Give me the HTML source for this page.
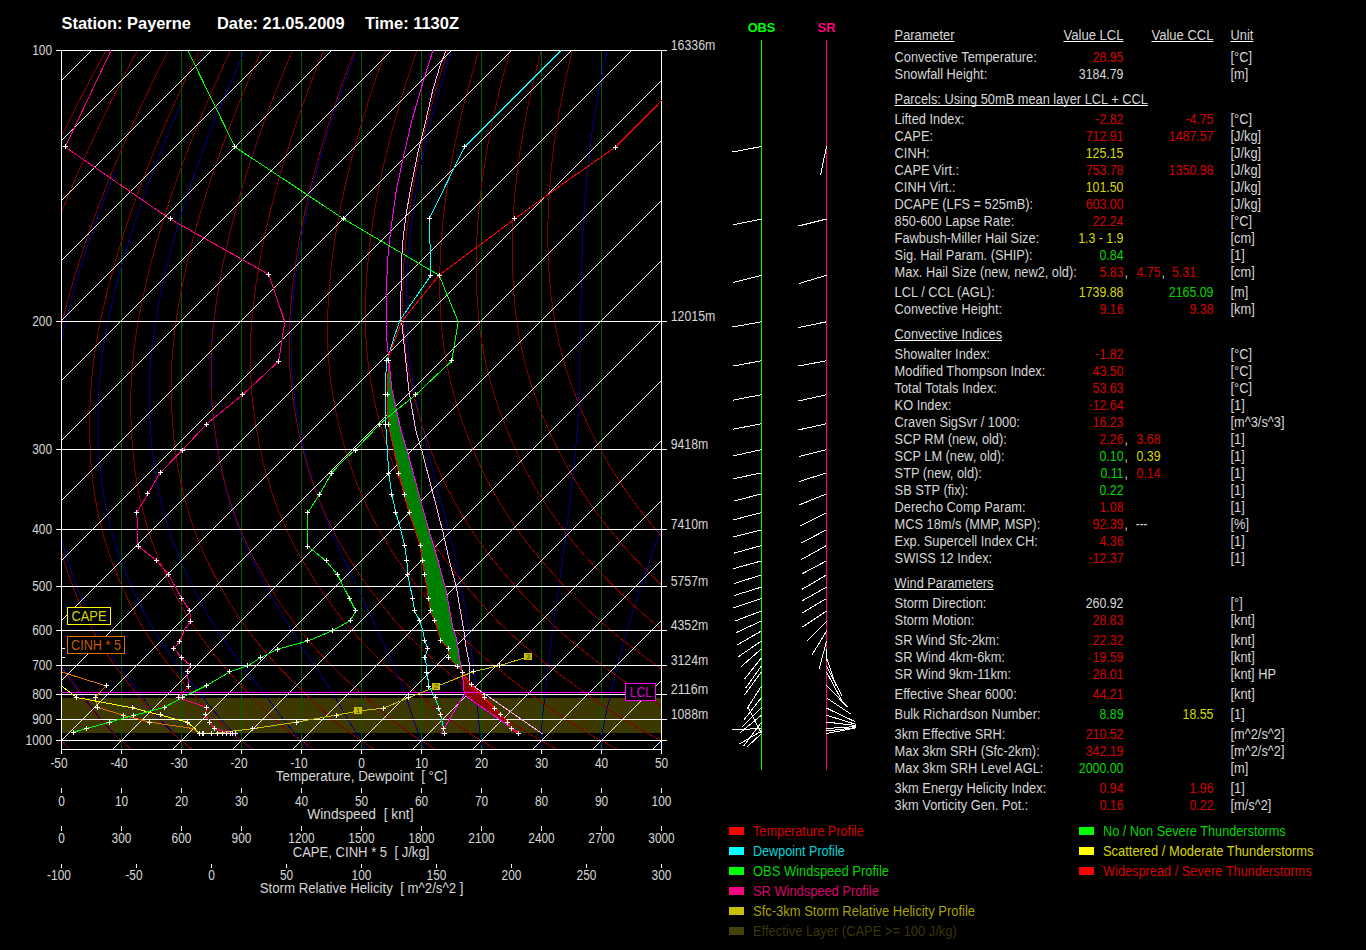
<!DOCTYPE html>
<html><head><meta charset="utf-8"><style>
html,body{margin:0;padding:0;background:#000;}
body{width:1366px;height:950px;overflow:hidden;}
svg{display:block;font-family:"Liberation Sans",sans-serif;}
text{white-space:pre;}
</style></head><body>
<svg width="1366" height="950" viewBox="0 0 1366 950">
<rect width="1366" height="950" fill="#000"/>
<defs><clipPath id="cf"><rect x="61" y="50" width="601" height="700"/></clipPath></defs>
<g clip-path="url(#cf)" shape-rendering="crispEdges" fill="none" stroke-width="1">
<rect x="61" y="698" width="600" height="35" fill="#3c3800" stroke="none"/>
<line x1="121.5" y1="50" x2="121.5" y2="749" stroke="#006000"/>
<line x1="181.5" y1="50" x2="181.5" y2="749" stroke="#006000"/>
<line x1="241.5" y1="50" x2="241.5" y2="749" stroke="#006000"/>
<line x1="301.5" y1="50" x2="301.5" y2="749" stroke="#006000"/>
<line x1="361.5" y1="50" x2="361.5" y2="749" stroke="#006000"/>
<line x1="421.5" y1="50" x2="421.5" y2="749" stroke="#006000"/>
<line x1="481.5" y1="50" x2="481.5" y2="749" stroke="#006000"/>
<line x1="541.5" y1="50" x2="541.5" y2="749" stroke="#006000"/>
<line x1="601.5" y1="50" x2="601.5" y2="749" stroke="#006000"/>
<polyline points="72.8,751.5 71.8,750.6 70.8,749.7 69.8,748.8 68.8,747.9 67.8,747.0 66.8,746.1 65.9,745.1 64.9,744.2 63.9,743.3 63.0,742.4 62.1,741.4 60.8,740.2 58.1,737.4 55.4,734.6 52.8,731.8 50.3,729.0 47.8,726.1 45.3,723.2 43.0,720.2 40.6,717.2 38.4,714.2 36.2,711.1 34.0,708.0 31.9,704.9 29.9,701.8 27.8,698.6 25.8,695.5 23.7,692.4 21.7,689.3 19.7,686.2 17.7,683.1 15.7,680.0 13.8,676.9 11.9,673.8 10.0,670.6 8.2,667.5 6.4,664.3 4.6,661.1 2.9,657.9 1.2,654.7 -0.5,651.5 -2.1,648.2 -3.7,645.0 -5.3,641.7 -6.8,638.4 -8.3,635.1 -9.7,631.7 -11.1,628.4 -12.5,625.0 -13.8,621.6 -15.0,618.2 -16.3,614.7 -17.5,611.2 -18.6,607.8 -19.7,604.3 -20.8,600.7 -21.9,597.2 -22.9,593.7 -23.9,590.1 -24.9,586.6 -25.8,583.0 -26.7,579.4 -27.6,575.8 -28.5,572.2 -29.3,568.6 -30.1,565.0 -30.9,561.4 -31.6,557.7 -32.3,554.1 -32.9,550.4 -33.6,546.7 -34.1,542.9 -34.7,539.2 -35.2,535.4 -35.6,531.6 -36.0,527.8 -36.4,523.9 -36.7,520.0 -37.0,516.2 -37.3,512.3 -37.5,508.3 -37.7,504.4 -37.9,500.4 -38.0,496.5 -38.1,492.5 -38.1,488.4 -38.1,484.4 -38.1,480.3 -38.0,476.2 -37.9,472.1 -37.8,468.0 -37.6,463.8 -37.4,459.7 -37.1,455.4 -36.8,451.2 -36.4,447.0 -36.1,442.7 -35.7,438.4 -35.2,434.1 -34.8,429.8 -34.3,425.5 -33.7,421.2 -33.2,416.8 -32.6,412.4 -32.0,408.1 -31.3,403.7 -30.6,399.2 -29.9,394.8 -29.1,390.3 -28.3,385.8 -27.4,381.2 -26.5,376.7 -25.6,372.1 -24.6,367.5 -23.5,362.8 -22.4,358.2 -21.3,353.4 -20.1,348.7 -18.9,343.9 -17.6,339.1 -16.3,334.2 -14.9,329.3 -13.4,324.4 -11.9,319.4 -10.4,314.4 -8.8,309.3 -7.2,304.3 -5.5,299.2 -3.8,294.1 -2.0,288.9 -1.0,285.8" stroke="#000080"/>
<polyline points="133.4,751.5 132.3,750.6 131.3,749.7 130.2,748.8 129.2,747.9 128.2,747.0 127.1,746.1 126.1,745.1 125.1,744.2 124.1,743.3 123.1,742.4 122.1,741.4 120.7,740.2 117.9,737.4 115.0,734.6 112.3,731.8 109.6,729.0 106.9,726.1 104.3,723.2 101.7,720.2 99.2,717.2 96.7,714.2 94.3,711.1 92.0,708.0 89.7,704.9 87.4,701.8 85.1,698.6 82.9,695.5 80.6,692.4 78.4,689.3 76.2,686.2 74.0,683.1 71.8,680.0 69.6,676.9 67.5,673.8 65.4,670.6 63.4,667.5 61.4,664.3 59.4,661.1 57.4,657.9 55.5,654.7 53.6,651.5 51.8,648.2 50.0,645.0 48.2,641.7 46.5,638.4 44.8,635.1 43.1,631.7 41.5,628.4 40.0,625.0 38.4,621.6 37.0,618.2 35.5,614.7 34.1,611.2 32.7,607.8 31.4,604.3 30.1,600.7 28.9,597.2 27.6,593.7 26.4,590.1 25.3,586.6 24.1,583.0 23.0,579.4 21.9,575.8 20.9,572.2 19.8,568.6 18.8,565.0 17.9,561.4 16.9,557.7 16.0,554.1 15.2,550.4 14.4,546.7 13.6,542.9 12.9,539.2 12.2,535.4 11.5,531.6 10.9,527.8 10.4,523.9 9.8,520.0 9.3,516.2 8.9,512.3 8.5,508.3 8.1,504.4 7.7,500.4 7.4,496.5 7.1,492.5 6.9,488.4 6.7,484.4 6.6,480.3 6.4,476.2 6.4,472.1 6.3,468.0 6.4,463.8 6.4,459.7 6.5,455.4 6.6,451.2 6.8,447.0 7.0,442.7 7.2,438.4 7.5,434.1 7.8,429.8 8.1,425.5 8.4,421.2 8.8,416.8 9.2,412.4 9.7,408.1 10.2,403.7 10.7,399.2 11.3,394.8 11.9,390.3 12.5,385.8 13.2,381.2 14.0,376.7 14.8,372.1 15.6,367.5 16.5,362.8 17.4,358.2 18.4,353.4 19.4,348.7 20.4,343.9 21.6,339.1 22.8,334.2 24.0,329.3 25.3,324.4 26.6,319.4 28.0,314.4 29.4,309.3 30.9,304.3 32.4,299.2 34.0,294.1 35.6,288.9 37.2,283.8 38.9,278.6 40.6,273.3 42.3,268.1 44.1,262.8 46.0,257.5 47.8,252.2 49.8,246.8 51.7,241.5 53.7,236.0 55.8,230.6 56.6,228.4" stroke="#000080"/>
<polyline points="193.5,751.5 192.4,750.6 191.4,749.7 190.3,748.8 189.3,747.9 188.2,747.0 187.2,746.1 186.2,745.1 185.2,744.2 184.1,743.3 183.1,742.4 182.1,741.4 180.7,740.2 177.8,737.4 174.9,734.6 172.1,731.8 169.3,729.0 166.5,726.1 163.8,723.2 161.1,720.2 158.4,717.2 155.8,714.2 153.3,711.1 150.8,708.0 148.4,704.9 145.9,701.8 143.5,698.6 141.1,695.5 138.7,692.4 136.3,689.3 133.9,686.2 131.5,683.1 129.1,680.0 126.8,676.9 124.4,673.8 122.2,670.6 119.9,667.5 117.7,664.3 115.5,661.1 113.4,657.9 111.3,654.7 109.2,651.5 107.1,648.2 105.1,645.0 103.1,641.7 101.2,638.4 99.3,635.1 97.4,631.7 95.6,628.4 93.8,625.0 92.1,621.6 90.4,618.2 88.8,614.7 87.2,611.2 85.6,607.8 84.0,604.3 82.5,600.7 81.1,597.2 79.6,593.7 78.2,590.1 76.8,586.6 75.5,583.0 74.2,579.4 72.9,575.8 71.6,572.2 70.4,568.6 69.2,565.0 68.0,561.4 66.9,557.7 65.8,554.1 64.7,550.4 63.7,546.7 62.7,542.9 61.8,539.2 60.9,535.4 60.0,531.6 59.2,527.8 58.5,523.9 57.7,520.0 57.1,516.2 56.4,512.3 55.8,508.3 55.2,504.4 54.7,500.4 54.2,496.5 53.7,492.5 53.3,488.4 52.9,484.4 52.6,480.3 52.3,476.2 52.0,472.1 51.8,468.0 51.6,463.8 51.5,459.7 51.4,455.4 51.3,451.2 51.3,447.0 51.3,442.7 51.4,438.4 51.4,434.1 51.5,429.8 51.7,425.5 51.9,421.2 52.1,416.8 52.3,412.4 52.6,408.1 52.9,403.7 53.3,399.2 53.7,394.8 54.1,390.3 54.6,385.8 55.1,381.2 55.6,376.7 56.3,372.1 56.9,367.5 57.6,362.8 58.4,358.2 59.2,353.4 60.0,348.7 60.9,343.9 61.9,339.1 62.9,334.2 64.0,329.3 65.1,324.4 66.3,319.4 67.5,314.4 68.8,309.3 70.1,304.3 71.4,299.2 72.8,294.1 74.3,288.9 75.7,283.8 77.2,278.6 78.8,273.3 80.4,268.1 82.0,262.8 83.7,257.5 85.5,252.2 87.2,246.8 89.0,241.5 90.9,236.0 92.8,230.6 94.7,225.1 96.7,219.6 98.7,214.1 100.8,208.6 102.9,203.0 105.0,197.4 107.2,191.8 109.4,186.1 111.7,180.4 114.0,174.7 116.4,169.0 116.4,169.0" stroke="#000080"/>
<polyline points="252.7,751.5 251.8,750.6 250.8,749.7 249.8,748.8 248.8,747.9 247.9,747.0 246.9,746.1 245.9,745.1 245.0,744.2 244.0,743.3 243.0,742.4 242.1,741.4 240.7,740.2 238.0,737.4 235.2,734.6 232.4,731.8 229.7,729.0 227.0,726.1 224.3,723.2 221.7,720.2 219.1,717.2 216.5,714.2 213.9,711.1 211.4,708.0 209.0,704.9 206.5,701.8 204.0,698.6 201.5,695.5 199.0,692.4 196.5,689.3 194.0,686.2 191.5,683.1 189.0,680.0 186.5,676.9 184.1,673.8 181.7,670.6 179.3,667.5 176.9,664.3 174.6,661.1 172.3,657.9 170.0,654.7 167.7,651.5 165.5,648.2 163.3,645.0 161.1,641.7 159.0,638.4 156.9,635.1 154.9,631.7 152.9,628.4 150.9,625.0 149.0,621.6 147.1,618.2 145.2,614.7 143.4,611.2 141.6,607.8 139.9,604.3 138.1,600.7 136.5,597.2 134.8,593.7 133.2,590.1 131.6,586.6 130.0,583.0 128.5,579.4 127.0,575.8 125.5,572.2 124.1,568.6 122.6,565.0 121.3,561.4 119.9,557.7 118.6,554.1 117.3,550.4 116.1,546.7 114.9,542.9 113.8,539.2 112.7,535.4 111.6,531.6 110.6,527.8 109.6,523.9 108.7,520.0 107.8,516.2 107.0,512.3 106.1,508.3 105.4,504.4 104.6,500.4 103.9,496.5 103.2,492.5 102.6,488.4 102.0,484.4 101.5,480.3 101.0,476.2 100.5,472.1 100.1,468.0 99.7,463.8 99.4,459.7 99.1,455.4 98.9,451.2 98.7,447.0 98.5,442.7 98.3,438.4 98.2,434.1 98.1,429.8 98.1,425.5 98.1,421.2 98.1,416.8 98.1,412.4 98.2,408.1 98.3,403.7 98.5,399.2 98.7,394.8 99.0,390.3 99.3,385.8 99.6,381.2 100.0,376.7 100.4,372.1 100.9,367.5 101.4,362.8 102.0,358.2 102.6,353.4 103.3,348.7 104.0,343.9 104.8,339.1 105.6,334.2 106.5,329.3 107.5,324.4 108.5,319.4 109.5,314.4 110.6,309.3 111.8,304.3 112.9,299.2 114.2,294.1 115.4,288.9 116.7,283.8 118.1,278.6 119.5,273.3 120.9,268.1 122.4,262.8 123.9,257.5 125.5,252.2 127.1,246.8 128.7,241.5 130.4,236.0 132.1,230.6 133.9,225.1 135.7,219.6 137.6,214.1 139.5,208.6 141.4,203.0 143.4,197.4 145.4,191.8 147.5,186.1 149.6,180.4 151.8,174.7 154.0,169.0 156.2,163.2 158.5,157.4 160.8,151.6 163.2,145.7 165.6,139.8 168.1,133.9 170.6,128.0 173.1,122.0 175.7,116.0 178.3,109.9 181.0,103.9 181.0,103.9" stroke="#000080"/>
<polyline points="311.0,751.5 310.2,750.6 309.4,749.7 308.6,748.8 307.7,747.9 306.9,747.0 306.1,746.1 305.3,745.1 304.4,744.2 303.6,743.3 302.8,742.4 302.0,741.4 300.8,740.2 298.4,737.4 296.0,734.6 293.6,731.8 291.2,729.0 288.8,726.1 286.5,723.2 284.1,720.2 281.7,717.2 279.4,714.2 277.1,711.1 274.8,708.0 272.5,704.9 270.2,701.8 267.9,698.6 265.5,695.5 263.2,692.4 260.8,689.3 258.3,686.2 255.9,683.1 253.5,680.0 251.0,676.9 248.6,673.8 246.2,670.6 243.8,667.5 241.4,664.3 239.1,661.1 236.7,657.9 234.3,654.7 232.0,651.5 229.7,648.2 227.4,645.0 225.1,641.7 222.9,638.4 220.6,635.1 218.5,631.7 216.3,628.4 214.2,625.0 212.1,621.6 210.0,618.2 208.0,614.7 206.0,611.2 204.0,607.8 202.1,604.3 200.2,600.7 198.3,597.2 196.5,593.7 194.7,590.1 192.9,586.6 191.1,583.0 189.3,579.4 187.6,575.8 185.9,572.2 184.3,568.6 182.6,565.0 181.0,561.4 179.5,557.7 177.9,554.1 176.4,550.4 175.0,546.7 173.6,542.9 172.2,539.2 170.9,535.4 169.6,531.6 168.4,527.8 167.2,523.9 166.0,520.0 164.9,516.2 163.8,512.3 162.7,508.3 161.7,504.4 160.8,500.4 159.8,496.5 158.9,492.5 158.1,488.4 157.3,484.4 156.5,480.3 155.8,476.2 155.1,472.1 154.5,468.0 153.9,463.8 153.3,459.7 152.8,455.4 152.3,451.2 151.9,447.0 151.5,442.7 151.2,438.4 150.8,434.1 150.5,429.8 150.3,425.5 150.0,421.2 149.8,416.8 149.7,412.4 149.6,408.1 149.5,403.7 149.4,399.2 149.4,394.8 149.5,390.3 149.6,385.8 149.7,381.2 149.9,376.7 150.1,372.1 150.4,367.5 150.7,362.8 151.1,358.2 151.5,353.4 152.0,348.7 152.5,343.9 153.1,339.1 153.7,334.2 154.4,329.3 155.2,324.4 156.0,319.4 156.8,314.4 157.7,309.3 158.7,304.3 159.7,299.2 160.7,294.1 161.8,288.9 162.9,283.8 164.0,278.6 165.2,273.3 166.5,268.1 167.8,262.8 169.1,257.5 170.5,252.2 171.9,246.8 173.3,241.5 174.8,236.0 176.4,230.6 178.0,225.1 179.6,219.6 181.3,214.1 183.0,208.6 184.8,203.0 186.6,197.4 188.4,191.8 190.3,186.1 192.3,180.4 194.3,174.7 196.3,169.0 198.4,163.2 200.5,157.4 202.6,151.6 204.8,145.7 207.1,139.8 209.4,133.9 211.7,128.0 214.1,122.0 216.5,116.0 219.0,109.9 221.5,103.9 224.0,97.8 226.6,91.7 229.3,85.5 232.0,79.3 234.7,73.1 237.5,66.9 240.3,60.6 243.1,54.3 244.9,50.5" stroke="#000080"/>
<polyline points="368.5,751.5 367.9,750.6 367.3,749.7 366.7,748.8 366.1,747.9 365.5,747.0 364.8,746.1 364.2,745.1 363.6,744.2 363.0,743.3 362.4,742.4 361.8,741.4 360.9,740.2 359.2,737.4 357.4,734.6 355.6,731.8 353.8,729.0 352.0,726.1 350.2,723.2 348.4,720.2 346.6,717.2 344.9,714.2 343.1,711.1 341.4,708.0 339.6,704.9 337.8,701.8 336.0,698.6 334.1,695.5 332.2,692.4 330.2,689.3 328.2,686.2 326.2,683.1 324.1,680.0 322.0,676.9 320.0,673.8 317.9,670.6 315.8,667.5 313.7,664.3 311.5,661.1 309.4,657.9 307.3,654.7 305.1,651.5 303.0,648.2 300.8,645.0 298.7,641.7 296.5,638.4 294.4,635.1 292.3,631.7 290.2,628.4 288.1,625.0 286.0,621.6 284.0,618.2 281.9,614.7 279.9,611.2 277.9,607.8 275.9,604.3 273.9,600.7 271.9,597.2 269.9,593.7 268.0,590.1 266.1,586.6 264.2,583.0 262.3,579.4 260.4,575.8 258.5,572.2 256.7,568.6 254.8,565.0 253.0,561.4 251.3,557.7 249.5,554.1 247.8,550.4 246.1,546.7 244.5,542.9 242.9,539.2 241.4,535.4 239.8,531.6 238.4,527.8 236.9,523.9 235.5,520.0 234.2,516.2 232.8,512.3 231.5,508.3 230.3,504.4 229.0,500.4 227.8,496.5 226.7,492.5 225.6,488.4 224.5,484.4 223.5,480.3 222.5,476.2 221.6,472.1 220.7,468.0 219.8,463.8 219.0,459.7 218.2,455.4 217.5,451.2 216.8,447.0 216.2,442.7 215.5,438.4 215.0,434.1 214.4,429.8 213.9,425.5 213.4,421.2 212.9,416.8 212.5,412.4 212.1,408.1 211.8,403.7 211.5,399.2 211.3,394.8 211.1,390.3 210.9,385.8 210.8,381.2 210.7,376.7 210.7,372.1 210.7,367.5 210.8,362.8 210.9,358.2 211.1,353.4 211.3,348.7 211.6,343.9 211.9,339.1 212.3,334.2 212.8,329.3 213.3,324.4 213.9,319.4 214.5,314.4 215.2,309.3 215.9,304.3 216.6,299.2 217.4,294.1 218.3,288.9 219.1,283.8 220.1,278.6 221.0,273.3 222.1,268.1 223.1,262.8 224.2,257.5 225.4,252.2 226.6,246.8 227.8,241.5 229.1,236.0 230.4,230.6 231.8,225.1 233.2,219.6 234.6,214.1 236.1,208.6 237.7,203.0 239.3,197.4 240.9,191.8 242.6,186.1 244.3,180.4 246.1,174.7 247.9,169.0 249.8,163.2 251.7,157.4 253.6,151.6 255.6,145.7 257.6,139.8 259.7,133.9 261.8,128.0 264.0,122.0 266.2,116.0 268.5,109.9 270.8,103.9 273.2,97.8 275.6,91.7 278.0,85.5 280.5,79.3 283.0,73.1 285.6,66.9 288.2,60.6 290.9,54.3 292.5,50.5" stroke="#000080"/>
<polyline points="425.7,751.5 425.4,750.6 425.0,749.7 424.6,748.8 424.2,747.9 423.8,747.0 423.5,746.1 423.1,745.1 422.7,744.2 422.3,743.3 422.0,742.4 421.6,741.4 421.1,740.2 420.0,737.4 418.9,734.6 417.9,731.8 416.8,729.0 415.8,726.1 414.8,723.2 413.7,720.2 412.7,717.2 411.7,714.2 410.7,711.1 409.8,708.0 408.8,704.9 407.8,701.8 406.7,698.6 405.6,695.5 404.5,692.4 403.3,689.3 402.1,686.2 400.9,683.1 399.6,680.0 398.3,676.9 397.0,673.8 395.7,670.6 394.3,667.5 393.0,664.3 391.6,661.1 390.2,657.9 388.8,654.7 387.3,651.5 385.8,648.2 384.3,645.0 382.8,641.7 381.3,638.4 379.8,635.1 378.2,631.7 376.7,628.4 375.1,625.0 373.5,621.6 371.9,618.2 370.4,614.7 368.7,611.2 367.1,607.8 365.5,604.3 363.9,600.7 362.2,597.2 360.5,593.7 358.8,590.1 357.2,586.6 355.5,583.0 353.7,579.4 352.0,575.8 350.3,572.2 348.5,568.6 346.8,565.0 345.0,561.4 343.3,557.7 341.6,554.1 339.9,550.4 338.1,546.7 336.5,542.9 334.8,539.2 333.1,535.4 331.5,531.6 329.9,527.8 328.3,523.9 326.8,520.0 325.2,516.2 323.7,512.3 322.2,508.3 320.8,504.4 319.3,500.4 317.9,496.5 316.5,492.5 315.2,488.4 313.9,484.4 312.6,480.3 311.3,476.2 310.1,472.1 308.9,468.0 307.8,463.8 306.7,459.7 305.6,455.4 304.6,451.2 303.6,447.0 302.6,442.7 301.7,438.4 300.8,434.1 299.9,429.8 299.1,425.5 298.3,421.2 297.5,416.8 296.8,412.4 296.1,408.1 295.4,403.7 294.8,399.2 294.2,394.8 293.7,390.3 293.2,385.8 292.7,381.2 292.3,376.7 292.0,372.1 291.7,367.5 291.4,362.8 291.3,358.2 291.1,353.4 291.0,348.7 291.0,343.9 291.0,339.1 291.1,334.2 291.2,329.3 291.4,324.4 291.7,319.4 292.0,314.4 292.3,309.3 292.7,304.3 293.2,299.2 293.6,294.1 294.2,288.9 294.7,283.8 295.4,278.6 296.0,273.3 296.7,268.1 297.5,262.8 298.3,257.5 299.1,252.2 300.0,246.8 301.0,241.5 301.9,236.0 303.0,230.6 304.0,225.1 305.2,219.6 306.3,214.1 307.5,208.6 308.8,203.0 310.1,197.4 311.4,191.8 312.8,186.1 314.2,180.4 315.7,174.7 317.3,169.0 318.8,163.2 320.5,157.4 322.1,151.6 323.8,145.7 325.6,139.8 327.4,133.9 329.2,128.0 331.1,122.0 333.1,116.0 335.1,109.9 337.1,103.9 339.2,97.8 341.3,91.7 343.5,85.5 345.7,79.3 348.0,73.1 350.3,66.9 352.6,60.6 355.0,54.3 356.5,50.5" stroke="#000080"/>
<polyline points="483.3,751.5 483.1,750.6 482.9,749.7 482.7,748.8 482.6,747.9 482.4,747.0 482.2,746.1 482.1,745.1 481.9,744.2 481.7,743.3 481.6,742.4 481.4,741.4 481.2,740.2 480.8,737.4 480.4,734.6 480.0,731.8 479.6,729.0 479.3,726.1 478.9,723.2 478.6,720.2 478.3,717.2 478.1,714.2 477.9,711.1 477.7,708.0 477.5,704.9 477.3,701.8 477.0,698.6 476.8,695.5 476.5,692.4 476.2,689.3 475.8,686.2 475.5,683.1 475.1,680.0 474.7,676.9 474.4,673.8 474.0,670.6 473.6,667.5 473.2,664.3 472.8,661.1 472.4,657.9 471.9,654.7 471.5,651.5 471.0,648.2 470.6,645.0 470.1,641.7 469.7,638.4 469.2,635.1 468.7,631.7 468.2,628.4 467.7,625.0 467.2,621.6 466.7,618.2 466.2,614.7 465.7,611.2 465.2,607.8 464.6,604.3 464.0,600.7 463.4,597.2 462.8,593.7 462.2,590.1 461.5,586.6 460.9,583.0 460.1,579.4 459.4,575.8 458.6,572.2 457.9,568.6 457.0,565.0 456.2,561.4 455.3,557.7 454.5,554.1 453.6,550.4 452.7,546.7 451.8,542.9 450.8,539.2 449.9,535.4 448.9,531.6 448.0,527.8 447.0,523.9 446.0,520.0 445.0,516.2 444.0,512.3 443.0,508.3 441.9,504.4 440.9,500.4 439.8,496.5 438.7,492.5 437.6,488.4 436.6,484.4 435.5,480.3 434.4,476.2 433.3,472.1 432.2,468.0 431.2,463.8 430.1,459.7 429.1,455.4 428.0,451.2 427.0,447.0 426.0,442.7 424.9,438.4 423.9,434.1 422.9,429.8 421.9,425.5 420.9,421.2 419.9,416.8 418.9,412.4 418.0,408.1 417.1,403.7 416.2,399.2 415.3,394.8 414.5,390.3 413.6,385.8 412.9,381.2 412.1,376.7 411.4,372.1 410.8,367.5 410.1,362.8 409.6,358.2 409.0,353.4 408.6,348.7 408.1,343.9 407.7,339.1 407.4,334.2 407.1,329.3 406.9,324.4 406.8,319.4 406.6,314.4 406.6,309.3 406.5,304.3 406.5,299.2 406.6,294.1 406.7,288.9 406.8,283.8 407.0,278.6 407.2,273.3 407.5,268.1 407.8,262.8 408.2,257.5 408.6,252.2 409.0,246.8 409.5,241.5 410.1,236.0 410.7,230.6 411.3,225.1 412.0,219.6 412.7,214.1 413.5,208.6 414.3,203.0 415.2,197.4 416.1,191.8 417.1,186.1 418.1,180.4 419.2,174.7 420.3,169.0 421.4,163.2 422.6,157.4 423.9,151.6 425.2,145.7 426.5,139.8 427.9,133.9 429.3,128.0 430.8,122.0 432.4,116.0 433.9,109.9 435.6,103.9 437.3,97.8 439.0,91.7 440.7,85.5 442.6,79.3 444.4,73.1 446.3,66.9 448.3,60.6 450.3,54.3 451.6,50.5" stroke="#000080"/>
<polyline points="541.4,751.5 541.4,750.6 541.4,749.7 541.3,748.8 541.3,747.9 541.3,747.0 541.3,746.1 541.3,745.1 541.3,744.2 541.3,743.3 541.3,742.4 541.3,741.4 541.3,740.2 541.4,737.4 541.4,734.6 541.5,731.8 541.7,729.0 541.8,726.1 542.0,723.2 542.3,720.2 542.5,717.2 542.8,714.2 543.2,711.1 543.6,708.0 543.9,704.9 544.3,701.8 544.7,698.6 545.1,695.5 545.4,692.4 545.8,689.3 546.1,686.2 546.4,683.1 546.7,680.0 547.1,676.9 547.4,673.8 547.7,670.6 548.1,667.5 548.4,664.3 548.8,661.1 549.2,657.9 549.5,654.7 549.9,651.5 550.3,648.2 550.7,645.0 551.1,641.7 551.5,638.4 551.9,635.1 552.4,631.7 552.8,628.4 553.3,625.0 553.8,621.6 554.3,618.2 554.8,614.7 555.3,611.2 555.8,607.8 556.3,604.3 556.8,600.7 557.3,597.2 557.9,593.7 558.4,590.1 558.9,586.6 559.4,583.0 559.9,579.4 560.4,575.8 560.9,572.2 561.4,568.6 561.9,565.0 562.3,561.4 562.8,557.7 563.3,554.1 563.8,550.4 564.3,546.7 564.7,542.9 565.2,539.2 565.7,535.4 566.2,531.6 566.7,527.8 567.3,523.9 567.8,520.0 568.3,516.2 568.7,512.3 569.2,508.3 569.7,504.4 570.2,500.4 570.7,496.5 571.1,492.5 571.6,488.4 572.0,484.4 572.5,480.3 572.9,476.2 573.4,472.1 573.8,468.0 574.2,463.8 574.6,459.7 575.1,455.4 575.5,451.2 575.9,447.0 576.2,442.7 576.6,438.4 576.9,434.1 577.2,429.8 577.5,425.5 577.8,421.2 578.0,416.8 578.2,412.4 578.4,408.1 578.6,403.7 578.8,399.2 579.0,394.8 579.1,390.3 579.3,385.8 579.4,381.2 579.5,376.7 579.6,372.1 579.7,367.5 579.8,362.8 579.9,358.2 580.0,353.4 580.0,348.7 580.1,343.9 580.2,339.1 580.3,334.2 580.4,329.3 580.5,324.4 580.6,319.4 580.7,314.4 580.8,309.3 580.9,304.3 581.0,299.2 581.1,294.1 581.2,288.9 581.4,283.8 581.5,278.6 581.6,273.3 581.7,268.1 581.9,262.8 582.0,257.5 582.2,252.2 582.4,246.8 582.6,241.5 582.8,236.0 583.1,230.6 583.3,225.1 583.6,219.6 583.9,214.1 584.3,208.6 584.7,203.0 585.1,197.4 585.5,191.8 586.0,186.1 586.5,180.4 587.0,174.7 587.6,169.0 588.2,163.2 588.8,157.4 589.5,151.6 590.2,145.7 591.0,139.8 591.8,133.9 592.7,128.0 593.6,122.0 594.5,116.0 595.5,109.9 596.5,103.9 597.6,97.8 598.7,91.7 599.8,85.5 601.0,79.3 602.3,73.1 603.6,66.9 604.9,60.6 606.3,54.3 607.2,50.5" stroke="#000080"/>
<polyline points="600.2,751.5 600.3,750.6 600.3,749.7 600.4,748.8 600.5,747.9 600.6,747.0 600.7,746.1 600.8,745.1 600.9,744.2 601.0,743.3 601.1,742.4 601.2,741.4 601.4,740.2 601.7,737.4 602.1,734.6 602.6,731.8 603.0,729.0 603.5,726.1 604.1,723.2 604.6,720.2 605.2,717.2 605.9,714.2 606.6,711.1 607.3,708.0 608.1,704.9 608.9,701.8 609.6,698.6 610.4,695.5 611.1,692.4 611.8,689.3 612.6,686.2 613.3,683.1 614.0,680.0 614.8,676.9 615.5,673.8 616.3,670.6 617.1,667.5 617.9,664.3 618.7,661.1 619.6,657.9 620.4,654.7 621.2,651.5 622.1,648.2 623.0,645.0 623.9,641.7 624.8,638.4 625.8,635.1 626.7,631.7 627.7,628.4 628.8,625.0 629.8,621.6 630.9,618.2 631.9,614.7 633.0,611.2 634.1,607.8 635.2,604.3 636.4,600.7 637.5,597.2 638.7,593.7 639.9,590.1 641.0,586.6 642.2,583.0 643.4,579.4 644.6,575.8 645.8,572.2 647.0,568.6 648.3,565.0 649.5,561.4 650.7,557.7 652.0,554.1 653.3,550.4 654.6,546.7 655.9,542.9 657.2,539.2 658.6,535.4 660.0,531.6 661.4,527.8 662.8,523.9 664.3,520.0 665.7,516.2 667.2,512.3 668.7,508.3 670.2,504.4 671.7,500.4 673.2,496.5 674.7,492.5 676.3,488.4 677.9,484.4 679.5,480.3 681.1,476.2 682.7,472.1 684.4,468.0 686.0,463.8 687.7,459.7 689.4,455.4 691.1,451.2 692.9,447.0 694.6,442.7 696.3,438.4 698.1,434.1 699.9,429.8 701.6,425.5 703.4,421.2 705.2,416.8 707.0,412.4 708.8,408.1 710.6,403.7 712.4,399.2 714.3,394.8 716.1,390.3 718.0,385.8 719.9,381.2 721.8,376.7 723.7,372.1 725.7,367.5 727.7,362.8 729.6,358.2 731.7,353.4 733.7,348.7 735.8,343.9 737.8,339.1 740.0,334.2 742.1,329.3 744.2,324.4 746.4,319.4 748.6,314.4 750.9,309.3 753.1,304.3 755.3,299.2 757.6,294.1 759.8,288.9 762.1,283.8 764.3,278.6 766.6,273.3 768.9,268.1 771.2,262.8 773.5,257.5 775.8,252.2 778.1,246.8 780.4,241.5 782.8,236.0 785.1,230.6 787.4,225.1 789.8,219.6 792.1,214.1 794.5,208.6 796.8,203.0 799.2,197.4 801.5,191.8 803.9,186.1 806.2,180.4 808.6,174.7 810.9,169.0 813.2,163.2 815.6,157.4 817.9,151.6 820.3,145.7 822.6,139.8 824.9,133.9 827.2,128.0 829.6,122.0 831.9,116.0 834.2,109.9 836.5,103.9 838.7,97.8 841.0,91.7 843.3,85.5 845.5,79.3 847.8,73.1 850.0,66.9 852.2,60.6 854.5,54.3 855.8,50.5" stroke="#000080"/>
<polyline points="659.5,751.5 659.6,750.6 659.8,749.7 659.9,748.8 660.0,747.9 660.2,747.0 660.3,746.1 660.5,745.1 660.7,744.2 660.8,743.3 661.0,742.4 661.2,741.4 661.4,740.2 661.9,737.4 662.5,734.6 663.1,731.8 663.8,729.0 664.5,726.1 665.2,723.2 666.0,720.2 666.8,717.2 667.6,714.2 668.5,711.1 669.5,708.0 670.4,704.9 671.4,701.8 672.4,698.6 673.3,695.5 674.3,692.4 675.2,689.3 676.2,686.2 677.1,683.1 678.1,680.0 679.0,676.9 680.0,673.8 681.0,670.6 682.0,667.5 683.1,664.3 684.1,661.1 685.2,657.9 686.3,654.7 687.4,651.5 688.5,648.2 689.6,645.0 690.8,641.7 692.0,638.4 693.2,635.1 694.4,631.7 695.7,628.4 696.9,625.0 698.3,621.6 699.6,618.2 700.9,614.7 702.3,611.2 703.7,607.8 705.1,604.3 706.5,600.7 708.0,597.2 709.4,593.7 710.9,590.1 712.4,586.6 713.9,583.0 715.4,579.4 716.9,575.8 718.4,572.2 720.0,568.6 721.5,565.0 723.1,561.4 724.7,557.7 726.3,554.1 727.9,550.4 729.6,546.7 731.2,542.9 732.9,539.2 734.7,535.4 736.4,531.6 738.2,527.8 740.0,523.9 741.8,520.0 743.7,516.2 745.6,512.3 747.4,508.3 749.3,504.4 751.3,500.4 753.2,496.5 755.2,492.5 757.2,488.4 759.2,484.4 761.2,480.3 763.3,476.2 765.4,472.1 767.5,468.0 769.6,463.8 771.8,459.7 774.0,455.4 776.2,451.2 778.4,447.0 780.7,442.7 782.9,438.4 785.2,434.1 787.5,429.8 789.8,425.5 792.1,421.2 794.5,416.8 796.8,412.4 799.2,408.1 801.6,403.7 804.0,399.2 806.5,394.8 809.0,390.3 811.5,385.8 814.0,381.2 816.6,376.7 819.1,372.1 821.8,367.5 824.4,362.8 827.1,358.2 829.8,353.4 832.6,348.7 835.4,343.9 838.2,339.1 841.0,334.2 843.9,329.3 846.9,324.4 849.9,319.4 852.9,314.4 855.9,309.3 859.0,304.3 862.1,299.2 865.2,294.1 868.4,288.9 871.5,283.8 874.7,278.6 877.9,273.3 881.2,268.1 884.5,262.8 887.8,257.5 891.1,252.2 894.5,246.8 897.8,241.5 901.2,236.0 904.7,230.6 908.1,225.1 911.6,219.6 915.1,214.1 918.7,208.6 922.3,203.0 925.8,197.4 929.5,191.8 933.1,186.1 936.8,180.4 940.5,174.7 944.2,169.0 948.0,163.2 951.8,157.4 955.6,151.6 959.4,145.7 963.3,139.8 967.2,133.9 971.1,128.0 975.0,122.0 979.0,116.0 983.0,109.9 987.0,103.9 991.1,97.8 995.2,91.7 999.3,85.5 1003.4,79.3 1007.6,73.1 1011.8,66.9 1016.0,60.6 1020.3,54.3 1022.8,50.5" stroke="#000080"/>
<polyline points="73.0,751.5 68.9,747.9 64.9,744.2 61.1,740.5 57.3,736.7 53.6,732.8 50.0,728.9 46.6,724.9 43.2,720.9 40.0,716.8 36.9,712.6 33.9,708.3 30.9,704.0 28.1,699.7 25.2,695.4 22.4,691.1 19.6,686.9 16.8,682.6 14.1,678.3 11.5,674.0 8.9,669.7 6.4,665.3 3.9,660.9 1.6,656.5 -0.8,652.1 -3.0,647.6 -5.2,643.2 -7.3,638.6 -9.4,634.1 -11.3,629.4 -13.2,624.8 -15.0,620.1 -16.7,615.3 -18.3,610.6 -19.9,605.8 -21.4,600.9 -22.9,596.1 -24.3,591.2 -25.6,586.3 -26.9,581.4 -28.1,576.4 -29.3,571.5 -30.4,566.5 -31.5,561.5 -32.5,556.5 -33.4,551.4 -34.3,546.3 -35.1,541.2 -35.8,536.0 -36.4,530.7 -37.0,525.5 -37.4,520.1 -37.8,514.8 -38.2,509.4 -38.5,504.0 -38.7,498.5 -38.8,493.0 -38.9,487.5 -38.8,481.9 -38.8,476.3 -38.6,470.6 -38.4,464.9 -38.1,459.1 -37.7,453.3 -37.2,447.5 -36.7,441.6 -36.1,435.7 -35.5,429.8 -34.8,423.9 -34.1,417.9 -33.2,411.9 -32.4,405.8 -31.4,399.7 -30.4,393.6 -29.3,387.4 -28.1,381.2 -26.9,374.9 -25.5,368.5 -24.1,362.1 -22.6,355.7 -21.0,349.1 -19.3,342.6 -17.5,335.9 -15.6,329.1 -13.5,322.3 -11.4,315.4 -9.3,308.5 -7.0,301.5 -4.7,294.5 -2.3,287.4 0.2,280.3 2.8,273.1 5.4,265.9 8.2,258.6 10.9,251.2 13.8,243.8 16.8,236.4 19.8,228.9 22.9,221.4 26.1,213.8 29.3,206.1 32.7,198.4 36.1,190.7 39.6,182.9 43.1,175.0 46.8,167.1 50.5,159.1 54.3,151.1 58.2,143.0 62.2,134.9 66.2,126.7 70.3,118.5 74.5,110.2 78.8,101.8 83.1,93.4 87.6,84.9 92.1,76.4 96.7,67.8 101.3,59.2 106.1,50.5" stroke="#800000"/>
<polyline points="134.0,751.5 129.6,747.9 125.3,744.2 121.0,740.5 116.9,736.7 112.9,732.8 109.0,728.9 105.2,724.9 101.5,720.9 97.9,716.8 94.5,712.6 91.2,708.3 87.9,704.0 84.7,699.7 81.6,695.4 78.4,691.1 75.3,686.9 72.2,682.6 69.2,678.3 66.2,674.0 63.4,669.7 60.5,665.3 57.8,660.9 55.1,656.5 52.5,652.1 49.9,647.6 47.4,643.2 45.0,638.6 42.7,634.1 40.4,629.4 38.3,624.8 36.2,620.1 34.2,615.3 32.3,610.6 30.4,605.8 28.6,600.9 26.9,596.1 25.2,591.2 23.6,586.3 22.0,581.4 20.5,576.4 19.0,571.5 17.6,566.5 16.3,561.5 15.0,556.5 13.8,551.4 12.7,546.3 11.7,541.2 10.7,536.0 9.8,530.7 9.0,525.5 8.3,520.1 7.6,514.8 7.0,509.4 6.5,504.0 6.0,498.5 5.6,493.0 5.3,487.5 5.1,481.9 4.9,476.3 4.8,470.6 4.8,464.9 4.9,459.1 5.0,453.3 5.2,447.5 5.5,441.6 5.9,435.7 6.2,429.8 6.7,423.9 7.2,417.9 7.8,411.9 8.4,405.8 9.1,399.7 9.9,393.6 10.8,387.4 11.8,381.2 12.8,374.9 13.9,368.5 15.1,362.1 16.4,355.7 17.8,349.1 19.3,342.6 20.9,335.9 22.6,329.1 24.4,322.3 26.2,315.4 28.2,308.5 30.3,301.5 32.4,294.5 34.6,287.4 36.9,280.3 39.2,273.1 41.7,265.9 44.2,258.6 46.8,251.2 49.4,243.8 52.2,236.4 55.0,228.9 57.9,221.4 60.9,213.8 63.9,206.1 67.1,198.4 70.3,190.7 73.6,182.9 77.0,175.0 80.4,167.1 84.0,159.1 87.6,151.1 91.3,143.0 95.0,134.9 98.9,126.7 102.8,118.5 106.8,110.2 110.9,101.8 115.1,93.4 119.4,84.9 123.7,76.4 128.1,67.8 132.6,59.2 137.2,50.5" stroke="#800000"/>
<polyline points="195.0,751.5 190.3,747.9 185.6,744.2 181.0,740.5 176.6,736.7 172.2,732.8 168.0,728.9 163.8,724.9 159.8,720.9 155.9,716.8 152.2,712.6 148.5,708.3 144.9,704.0 141.4,699.7 137.9,695.4 134.5,691.1 131.0,686.9 127.6,682.6 124.3,678.3 121.0,674.0 117.8,669.7 114.7,665.3 111.6,660.9 108.7,656.5 105.7,652.1 102.9,647.6 100.1,643.2 97.4,638.6 94.7,634.1 92.2,629.4 89.7,624.8 87.4,620.1 85.1,615.3 82.9,610.6 80.7,605.8 78.6,600.9 76.6,596.1 74.7,591.2 72.8,586.3 70.9,581.4 69.1,576.4 67.4,571.5 65.7,566.5 64.1,561.5 62.6,556.5 61.1,551.4 59.7,546.3 58.4,541.2 57.2,536.0 56.0,530.7 55.0,525.5 54.0,520.1 53.0,514.8 52.2,509.4 51.4,504.0 50.7,498.5 50.0,493.0 49.5,487.5 49.0,481.9 48.6,476.3 48.2,470.6 48.0,464.9 47.8,459.1 47.7,453.3 47.7,447.5 47.7,441.6 47.8,435.7 48.0,429.8 48.2,423.9 48.5,417.9 48.8,411.9 49.2,405.8 49.7,399.7 50.3,393.6 50.9,387.4 51.6,381.2 52.4,374.9 53.3,368.5 54.3,362.1 55.4,355.7 56.6,349.1 57.8,342.6 59.2,335.9 60.7,329.1 62.2,322.3 63.9,315.4 65.7,308.5 67.5,301.5 69.4,294.5 71.4,287.4 73.5,280.3 75.6,273.1 77.9,265.9 80.2,258.6 82.6,251.2 85.0,243.8 87.6,236.4 90.2,228.9 92.9,221.4 95.7,213.8 98.5,206.1 101.5,198.4 104.5,190.7 107.6,182.9 110.8,175.0 114.1,167.1 117.4,159.1 120.8,151.1 124.3,143.0 127.9,134.9 131.6,126.7 135.3,118.5 139.2,110.2 143.1,101.8 147.1,93.4 151.2,84.9 155.3,76.4 159.5,67.8 163.9,59.2 168.3,50.5" stroke="#800000"/>
<polyline points="256.0,751.5 250.9,747.9 245.9,744.2 241.0,740.5 236.2,736.7 231.5,732.8 226.9,728.9 222.5,724.9 218.1,720.9 213.9,716.8 209.8,712.6 205.8,708.3 201.9,704.0 198.1,699.7 194.3,695.4 190.5,691.1 186.7,686.9 183.0,682.6 179.4,678.3 175.8,674.0 172.3,669.7 168.9,665.3 165.5,660.9 162.2,656.5 159.0,652.1 155.8,647.6 152.7,643.2 149.7,638.6 146.8,634.1 144.0,629.4 141.2,624.8 138.6,620.1 136.0,615.3 133.5,610.6 131.0,605.8 128.7,600.9 126.4,596.1 124.1,591.2 122.0,586.3 119.8,581.4 117.8,576.4 115.8,571.5 113.8,566.5 111.9,561.5 110.1,556.5 108.4,551.4 106.7,546.3 105.1,541.2 103.6,536.0 102.2,530.7 100.9,525.5 99.6,520.1 98.5,514.8 97.4,509.4 96.3,504.0 95.3,498.5 94.5,493.0 93.6,487.5 92.9,481.9 92.2,476.3 91.7,470.6 91.1,464.9 90.7,459.1 90.4,453.3 90.1,447.5 89.9,441.6 89.8,435.7 89.7,429.8 89.7,423.9 89.7,417.9 89.8,411.9 90.0,405.8 90.3,399.7 90.6,393.6 91.0,387.4 91.5,381.2 92.1,374.9 92.8,368.5 93.5,362.1 94.4,355.7 95.3,349.1 96.4,342.6 97.5,335.9 98.8,329.1 100.1,322.3 101.6,315.4 103.2,308.5 104.8,301.5 106.5,294.5 108.3,287.4 110.1,280.3 112.1,273.1 114.1,265.9 116.2,258.6 118.4,251.2 120.6,243.8 123.0,236.4 125.4,228.9 127.9,221.4 130.5,213.8 133.2,206.1 135.9,198.4 138.7,190.7 141.6,182.9 144.6,175.0 147.7,167.1 150.9,159.1 154.1,151.1 157.4,143.0 160.8,134.9 164.3,126.7 167.9,118.5 171.5,110.2 175.2,101.8 179.0,93.4 182.9,84.9 186.9,76.4 191.0,67.8 195.1,59.2 199.3,50.5" stroke="#800000"/>
<polyline points="317.0,751.5 311.6,747.9 306.2,744.2 301.0,740.5 295.8,736.7 290.8,732.8 285.9,728.9 281.1,724.9 276.4,720.9 271.9,716.8 267.4,712.6 263.1,708.3 258.9,704.0 254.8,699.7 250.6,695.4 246.5,691.1 242.5,686.9 238.4,682.6 234.5,678.3 230.6,674.0 226.8,669.7 223.0,665.3 219.4,660.9 215.8,656.5 212.2,652.1 208.8,647.6 205.4,643.2 202.1,638.6 198.9,634.1 195.7,629.4 192.7,624.8 189.7,620.1 186.9,615.3 184.1,610.6 181.3,605.8 178.7,600.9 176.1,596.1 173.6,591.2 171.1,586.3 168.7,581.4 166.4,576.4 164.1,571.5 161.9,566.5 159.7,561.5 157.7,556.5 155.7,551.4 153.7,546.3 151.9,541.2 150.1,536.0 148.4,530.7 146.9,525.5 145.3,520.1 143.9,514.8 142.5,509.4 141.2,504.0 140.0,498.5 138.9,493.0 137.8,487.5 136.8,481.9 135.9,476.3 135.1,470.6 134.3,464.9 133.7,459.1 133.1,453.3 132.6,447.5 132.1,441.6 131.8,435.7 131.4,429.8 131.2,423.9 131.0,417.9 130.9,411.9 130.8,405.8 130.8,399.7 130.9,393.6 131.1,387.4 131.4,381.2 131.7,374.9 132.2,368.5 132.7,362.1 133.4,355.7 134.1,349.1 134.9,342.6 135.9,335.9 136.9,329.1 138.0,322.3 139.3,315.4 140.6,308.5 142.0,301.5 143.5,294.5 145.1,287.4 146.8,280.3 148.5,273.1 150.3,265.9 152.2,258.6 154.2,251.2 156.2,243.8 158.4,236.4 160.6,228.9 162.9,221.4 165.3,213.8 167.8,206.1 170.3,198.4 173.0,190.7 175.7,182.9 178.5,175.0 181.4,167.1 184.3,159.1 187.4,151.1 190.5,143.0 193.7,134.9 197.0,126.7 200.4,118.5 203.8,110.2 207.4,101.8 211.0,93.4 214.7,84.9 218.5,76.4 222.4,67.8 226.4,59.2 230.4,50.5" stroke="#800000"/>
<polyline points="378.1,751.5 372.2,747.9 366.5,744.2 361.0,740.5 355.5,736.7 350.1,732.8 344.9,728.9 339.7,724.9 334.7,720.9 329.8,716.8 325.1,712.6 320.5,708.3 315.9,704.0 311.4,699.7 307.0,695.4 302.6,691.1 298.2,686.9 293.8,682.6 289.6,678.3 285.4,674.0 281.2,669.7 277.2,665.3 273.2,660.9 269.3,656.5 265.5,652.1 261.7,647.6 258.0,643.2 254.4,638.6 250.9,634.1 247.5,629.4 244.2,624.8 240.9,620.1 237.7,615.3 234.7,610.6 231.7,605.8 228.7,600.9 225.9,596.1 223.1,591.2 220.3,586.3 217.6,581.4 215.0,576.4 212.5,571.5 210.0,566.5 207.6,561.5 205.2,556.5 202.9,551.4 200.7,546.3 198.6,541.2 196.6,536.0 194.7,530.7 192.8,525.5 191.0,520.1 189.3,514.8 187.7,509.4 186.2,504.0 184.7,498.5 183.3,493.0 182.0,487.5 180.7,481.9 179.6,476.3 178.5,470.6 177.5,464.9 176.6,459.1 175.8,453.3 175.0,447.5 174.3,441.6 173.7,435.7 173.2,429.8 172.7,423.9 172.2,417.9 171.9,411.9 171.6,405.8 171.4,399.7 171.3,393.6 171.2,387.4 171.3,381.2 171.4,374.9 171.6,368.5 171.9,362.1 172.3,355.7 172.9,349.1 173.5,342.6 174.2,335.9 175.0,329.1 175.9,322.3 177.0,315.4 178.1,308.5 179.3,301.5 180.6,294.5 181.9,287.4 183.4,280.3 184.9,273.1 186.5,265.9 188.2,258.6 190.0,251.2 191.8,243.8 193.8,236.4 195.8,228.9 197.9,221.4 200.1,213.8 202.4,206.1 204.7,198.4 207.2,190.7 209.7,182.9 212.3,175.0 215.0,167.1 217.8,159.1 220.6,151.1 223.6,143.0 226.6,134.9 229.7,126.7 232.9,118.5 236.2,110.2 239.5,101.8 243.0,93.4 246.5,84.9 250.1,76.4 253.8,67.8 257.6,59.2 261.5,50.5" stroke="#800000"/>
<polyline points="439.1,751.5 432.9,747.9 426.9,744.2 420.9,740.5 415.1,736.7 409.4,732.8 403.8,728.9 398.4,724.9 393.0,720.9 387.8,716.8 382.7,712.6 377.8,708.3 372.9,704.0 368.1,699.7 363.4,695.4 358.6,691.1 353.9,686.9 349.3,682.6 344.7,678.3 340.1,674.0 335.7,669.7 331.3,665.3 327.1,660.9 322.9,656.5 318.7,652.1 314.7,647.6 310.7,643.2 306.8,638.6 303.0,634.1 299.2,629.4 295.6,624.8 292.1,620.1 288.6,615.3 285.3,610.6 282.0,605.8 278.7,600.9 275.6,596.1 272.5,591.2 269.5,586.3 266.6,581.4 263.7,576.4 260.8,571.5 258.1,566.5 255.4,561.5 252.7,556.5 250.2,551.4 247.7,546.3 245.4,541.2 243.1,536.0 240.9,530.7 238.8,525.5 236.7,520.1 234.8,514.8 232.9,509.4 231.1,504.0 229.3,498.5 227.7,493.0 226.1,487.5 224.6,481.9 223.2,476.3 221.9,470.6 220.7,464.9 219.5,459.1 218.5,453.3 217.5,447.5 216.6,441.6 215.7,435.7 214.9,429.8 214.2,423.9 213.5,417.9 212.9,411.9 212.4,405.8 212.0,399.7 211.6,393.6 211.3,387.4 211.2,381.2 211.1,374.9 211.1,368.5 211.1,362.1 211.3,355.7 211.6,349.1 212.0,342.6 212.5,335.9 213.1,329.1 213.8,322.3 214.7,315.4 215.6,308.5 216.5,301.5 217.6,294.5 218.8,287.4 220.0,280.3 221.3,273.1 222.7,265.9 224.2,258.6 225.8,251.2 227.5,243.8 229.2,236.4 231.0,228.9 232.9,221.4 234.9,213.8 237.0,206.1 239.2,198.4 241.4,190.7 243.7,182.9 246.1,175.0 248.6,167.1 251.2,159.1 253.9,151.1 256.7,143.0 259.5,134.9 262.4,126.7 265.4,118.5 268.5,110.2 271.7,101.8 275.0,93.4 278.3,84.9 281.7,76.4 285.3,67.8 288.9,59.2 292.6,50.5" stroke="#800000"/>
<polyline points="500.1,751.5 493.6,747.9 487.2,744.2 480.9,740.5 474.8,736.7 468.7,732.8 462.8,728.9 457.0,724.9 451.3,720.9 445.8,716.8 440.4,712.6 435.1,708.3 429.9,704.0 424.8,699.7 419.7,695.4 414.6,691.1 409.6,686.9 404.7,682.6 399.7,678.3 394.9,674.0 390.2,669.7 385.5,665.3 380.9,660.9 376.4,656.5 372.0,652.1 367.6,647.6 363.3,643.2 359.1,638.6 355.0,634.1 351.0,629.4 347.1,624.8 343.3,620.1 339.5,615.3 335.9,610.6 332.3,605.8 328.8,600.9 325.3,596.1 322.0,591.2 318.7,586.3 315.5,581.4 312.3,576.4 309.2,571.5 306.1,566.5 303.2,561.5 300.3,556.5 297.5,551.4 294.7,546.3 292.1,541.2 289.5,536.0 287.1,530.7 284.7,525.5 282.4,520.1 280.2,514.8 278.1,509.4 276.0,504.0 274.0,498.5 272.1,493.0 270.3,487.5 268.6,481.9 266.9,476.3 265.3,470.6 263.8,464.9 262.4,459.1 261.1,453.3 259.9,447.5 258.8,441.6 257.7,435.7 256.6,429.8 255.7,423.9 254.8,417.9 253.9,411.9 253.2,405.8 252.5,399.7 251.9,393.6 251.4,387.4 251.0,381.2 250.7,374.9 250.5,368.5 250.4,362.1 250.3,355.7 250.4,349.1 250.6,342.6 250.8,335.9 251.2,329.1 251.7,322.3 252.3,315.4 253.0,308.5 253.8,301.5 254.7,294.5 255.6,287.4 256.6,280.3 257.8,273.1 259.0,265.9 260.2,258.6 261.6,251.2 263.1,243.8 264.6,236.4 266.2,228.9 267.9,221.4 269.7,213.8 271.6,206.1 273.6,198.4 275.6,190.7 277.8,182.9 280.0,175.0 282.3,167.1 284.7,159.1 287.2,151.1 289.7,143.0 292.4,134.9 295.1,126.7 297.9,118.5 300.9,110.2 303.9,101.8 306.9,93.4 310.1,84.9 313.4,76.4 316.7,67.8 320.1,59.2 323.6,50.5" stroke="#800000"/>
<polyline points="561.1,751.5 554.2,747.9 547.5,744.2 540.9,740.5 534.4,736.7 528.0,732.8 521.8,728.9 515.6,724.9 509.6,720.9 503.8,716.8 498.0,712.6 492.4,708.3 486.9,704.0 481.5,699.7 476.1,695.4 470.7,691.1 465.3,686.9 460.1,682.6 454.8,678.3 449.7,674.0 444.6,669.7 439.7,665.3 434.8,660.9 430.0,656.5 425.2,652.1 420.5,647.6 416.0,643.2 411.5,638.6 407.1,634.1 402.8,629.4 398.6,624.8 394.4,620.1 390.4,615.3 386.5,610.6 382.6,605.8 378.8,600.9 375.1,596.1 371.5,591.2 367.9,586.3 364.4,581.4 360.9,576.4 357.5,571.5 354.2,566.5 351.0,561.5 347.8,556.5 344.7,551.4 341.7,546.3 338.8,541.2 336.0,536.0 333.3,530.7 330.7,525.5 328.1,520.1 325.6,514.8 323.2,509.4 320.9,504.0 318.7,498.5 316.5,493.0 314.5,487.5 312.5,481.9 310.6,476.3 308.7,470.6 307.0,464.9 305.4,459.1 303.8,453.3 302.4,447.5 301.0,441.6 299.6,435.7 298.4,429.8 297.2,423.9 296.0,417.9 295.0,411.9 294.0,405.8 293.1,399.7 292.3,393.6 291.6,387.4 290.9,381.2 290.4,374.9 289.9,368.5 289.6,362.1 289.3,355.7 289.2,349.1 289.1,342.6 289.2,335.9 289.3,329.1 289.6,322.3 290.0,315.4 290.5,308.5 291.1,301.5 291.7,294.5 292.4,287.4 293.3,280.3 294.2,273.1 295.2,265.9 296.2,258.6 297.4,251.2 298.7,243.8 300.0,236.4 301.4,228.9 302.9,221.4 304.5,213.8 306.2,206.1 308.0,198.4 309.8,190.7 311.8,182.9 313.8,175.0 315.9,167.1 318.1,159.1 320.4,151.1 322.8,143.0 325.3,134.9 327.8,126.7 330.5,118.5 333.2,110.2 336.0,101.8 338.9,93.4 341.9,84.9 345.0,76.4 348.1,67.8 351.4,59.2 354.7,50.5" stroke="#800000"/>
<polyline points="622.1,751.5 614.9,747.9 607.8,744.2 600.9,740.5 594.0,736.7 587.3,732.8 580.7,728.9 574.3,724.9 567.9,720.9 561.7,716.8 555.7,712.6 549.7,708.3 543.9,704.0 538.1,699.7 532.4,695.4 526.7,691.1 521.1,686.9 515.5,682.6 509.9,678.3 504.5,674.0 499.1,669.7 493.8,665.3 488.6,660.9 483.5,656.5 478.5,652.1 473.5,647.6 468.6,643.2 463.8,638.6 459.1,634.1 454.5,629.4 450.0,624.8 445.6,620.1 441.3,615.3 437.1,610.6 432.9,605.8 428.8,600.9 424.8,596.1 420.9,591.2 417.1,586.3 413.3,581.4 409.6,576.4 405.9,571.5 402.3,566.5 398.8,561.5 395.4,556.5 392.0,551.4 388.7,546.3 385.6,541.2 382.5,536.0 379.5,530.7 376.6,525.5 373.8,520.1 371.1,514.8 368.4,509.4 365.8,504.0 363.3,498.5 360.9,493.0 358.6,487.5 356.4,481.9 354.2,476.3 352.2,470.6 350.2,464.9 348.3,459.1 346.5,453.3 344.8,447.5 343.2,441.6 341.6,435.7 340.1,429.8 338.7,423.9 337.3,417.9 336.0,411.9 334.8,405.8 333.7,399.7 332.6,393.6 331.7,387.4 330.8,381.2 330.0,374.9 329.3,368.5 328.8,362.1 328.3,355.7 327.9,349.1 327.7,342.6 327.5,335.9 327.5,329.1 327.5,322.3 327.7,315.4 328.0,308.5 328.3,301.5 328.8,294.5 329.3,287.4 329.9,280.3 330.6,273.1 331.4,265.9 332.3,258.6 333.2,251.2 334.3,243.8 335.4,236.4 336.6,228.9 337.9,221.4 339.3,213.8 340.8,206.1 342.4,198.4 344.1,190.7 345.8,182.9 347.7,175.0 349.6,167.1 351.6,159.1 353.7,151.1 355.9,143.0 358.2,134.9 360.5,126.7 363.0,118.5 365.5,110.2 368.2,101.8 370.9,93.4 373.7,84.9 376.6,76.4 379.6,67.8 382.6,59.2 385.8,50.5" stroke="#800000"/>
<polyline points="683.1,751.5 675.5,747.9 668.1,744.2 660.8,740.5 653.7,736.7 646.6,732.8 639.7,728.9 632.9,724.9 626.2,720.9 619.7,716.8 613.3,712.6 607.1,708.3 600.9,704.0 594.8,699.7 588.8,695.4 582.7,691.1 576.8,686.9 570.9,682.6 565.0,678.3 559.3,674.0 553.6,669.7 548.0,665.3 542.5,660.9 537.1,656.5 531.7,652.1 526.4,647.6 521.3,643.2 516.2,638.6 511.2,634.1 506.3,629.4 501.5,624.8 496.8,620.1 492.2,615.3 487.7,610.6 483.2,605.8 478.9,600.9 474.6,596.1 470.4,591.2 466.3,586.3 462.2,581.4 458.2,576.4 454.3,571.5 450.4,566.5 446.6,561.5 442.9,556.5 439.3,551.4 435.8,546.3 432.3,541.2 429.0,536.0 425.7,530.7 422.6,525.5 419.5,520.1 416.5,514.8 413.6,509.4 410.8,504.0 408.0,498.5 405.4,493.0 402.8,487.5 400.3,481.9 397.9,476.3 395.6,470.6 393.4,464.9 391.2,459.1 389.2,453.3 387.3,447.5 385.4,441.6 383.6,435.7 381.8,429.8 380.1,423.9 378.5,417.9 377.0,411.9 375.6,405.8 374.2,399.7 373.0,393.6 371.8,387.4 370.7,381.2 369.7,374.9 368.8,368.5 368.0,362.1 367.3,355.7 366.7,349.1 366.2,342.6 365.8,335.9 365.6,329.1 365.4,322.3 365.4,315.4 365.4,308.5 365.6,301.5 365.8,294.5 366.1,287.4 366.5,280.3 367.0,273.1 367.6,265.9 368.3,258.6 369.0,251.2 369.9,243.8 370.8,236.4 371.8,228.9 373.0,221.4 374.2,213.8 375.4,206.1 376.8,198.4 378.3,190.7 379.8,182.9 381.5,175.0 383.2,167.1 385.0,159.1 387.0,151.1 389.0,143.0 391.1,134.9 393.2,126.7 395.5,118.5 397.9,110.2 400.3,101.8 402.8,93.4 405.5,84.9 408.2,76.4 411.0,67.8 413.9,59.2 416.9,50.5" stroke="#800000"/>
<polyline points="744.1,751.5 736.2,747.9 728.5,744.2 720.8,740.5 713.3,736.7 705.9,732.8 698.7,728.9 691.6,724.9 684.5,720.9 677.7,716.8 671.0,712.6 664.4,708.3 657.9,704.0 651.5,699.7 645.1,695.4 638.8,691.1 632.5,686.9 626.3,682.6 620.1,678.3 614.0,674.0 608.0,669.7 602.1,665.3 596.3,660.9 590.6,656.5 585.0,652.1 579.4,647.6 573.9,643.2 568.5,638.6 563.2,634.1 558.0,629.4 553.0,624.8 548.0,620.1 543.1,615.3 538.3,610.6 533.5,605.8 528.9,600.9 524.3,596.1 519.8,591.2 515.4,586.3 511.1,581.4 506.8,576.4 502.6,571.5 498.5,566.5 494.4,561.5 490.4,556.5 486.6,551.4 482.8,546.3 479.1,541.2 475.4,536.0 471.9,530.7 468.5,525.5 465.2,520.1 461.9,514.8 458.8,509.4 455.7,504.0 452.7,498.5 449.8,493.0 446.9,487.5 444.2,481.9 441.6,476.3 439.0,470.6 436.5,464.9 434.2,459.1 431.9,453.3 429.7,447.5 427.6,441.6 425.5,435.7 423.5,429.8 421.6,423.9 419.8,417.9 418.1,411.9 416.4,405.8 414.8,399.7 413.3,393.6 411.9,387.4 410.6,381.2 409.3,374.9 408.2,368.5 407.2,362.1 406.3,355.7 405.5,349.1 404.7,342.6 404.2,335.9 403.7,329.1 403.3,322.3 403.1,315.4 402.9,308.5 402.8,301.5 402.9,294.5 403.0,287.4 403.2,280.3 403.4,273.1 403.8,265.9 404.3,258.6 404.8,251.2 405.5,243.8 406.2,236.4 407.0,228.9 408.0,221.4 409.0,213.8 410.1,206.1 411.2,198.4 412.5,190.7 413.9,182.9 415.3,175.0 416.9,167.1 418.5,159.1 420.2,151.1 422.0,143.0 423.9,134.9 425.9,126.7 428.0,118.5 430.2,110.2 432.5,101.8 434.8,93.4 437.3,84.9 439.8,76.4 442.4,67.8 445.1,59.2 448.0,50.5" stroke="#800000"/>
<polyline points="805.1,751.5 796.9,747.9 788.8,744.2 780.8,740.5 773.0,736.7 765.2,732.8 757.7,728.9 750.2,724.9 742.8,720.9 735.6,716.8 728.6,712.6 721.7,708.3 714.9,704.0 708.2,699.7 701.5,695.4 694.8,691.1 688.2,686.9 681.7,682.6 675.2,678.3 668.8,674.0 662.5,669.7 656.3,665.3 650.2,660.9 644.2,656.5 638.2,652.1 632.3,647.6 626.6,643.2 620.9,638.6 615.3,634.1 609.8,629.4 604.4,624.8 599.1,620.1 594.0,615.3 588.9,610.6 583.8,605.8 578.9,600.9 574.1,596.1 569.3,591.2 564.6,586.3 560.0,581.4 555.4,576.4 551.0,571.5 546.6,566.5 542.2,561.5 538.0,556.5 533.8,551.4 529.8,546.3 525.8,541.2 521.9,536.0 518.1,530.7 514.5,525.5 510.9,520.1 507.4,514.8 503.9,509.4 500.6,504.0 497.4,498.5 494.2,493.0 491.1,487.5 488.1,481.9 485.2,476.3 482.4,470.6 479.7,464.9 477.1,459.1 474.6,453.3 472.1,447.5 469.8,441.6 467.5,435.7 465.3,429.8 463.1,423.9 461.1,417.9 459.1,411.9 457.2,405.8 455.4,399.7 453.6,393.6 452.0,387.4 450.4,381.2 449.0,374.9 447.6,368.5 446.4,362.1 445.3,355.7 444.2,349.1 443.3,342.6 442.5,335.9 441.8,329.1 441.2,322.3 440.8,315.4 440.4,308.5 440.1,301.5 439.9,294.5 439.8,287.4 439.8,280.3 439.9,273.1 440.0,265.9 440.3,258.6 440.7,251.2 441.1,243.8 441.6,236.4 442.2,228.9 443.0,221.4 443.8,213.8 444.7,206.1 445.7,198.4 446.7,190.7 447.9,182.9 449.2,175.0 450.5,167.1 452.0,159.1 453.5,151.1 455.1,143.0 456.8,134.9 458.6,126.7 460.5,118.5 462.5,110.2 464.6,101.8 466.8,93.4 469.1,84.9 471.4,76.4 473.9,67.8 476.4,59.2 479.0,50.5" stroke="#800000"/>
<polyline points="866.1,751.5 857.5,747.9 849.1,744.2 840.8,740.5 832.6,736.7 824.5,732.8 816.6,728.9 808.8,724.9 801.1,720.9 793.6,716.8 786.3,712.6 779.0,708.3 771.9,704.0 764.8,699.7 757.8,695.4 750.8,691.1 743.9,686.9 737.1,682.6 730.3,678.3 723.6,674.0 717.0,669.7 710.5,665.3 704.1,660.9 697.7,656.5 691.5,652.1 685.3,647.6 679.2,643.2 673.2,638.6 667.3,634.1 661.6,629.4 655.9,624.8 650.3,620.1 644.8,615.3 639.5,610.6 634.2,605.8 629.0,600.9 623.8,596.1 618.8,591.2 613.8,586.3 608.9,581.4 604.1,576.4 599.3,571.5 594.6,566.5 590.0,561.5 585.5,556.5 581.1,551.4 576.8,546.3 572.5,541.2 568.4,536.0 564.4,530.7 560.4,525.5 556.6,520.1 552.8,514.8 549.1,509.4 545.5,504.0 542.0,498.5 538.6,493.0 535.3,487.5 532.0,481.9 528.9,476.3 525.8,470.6 522.9,464.9 520.0,459.1 517.3,453.3 514.6,447.5 512.0,441.6 509.5,435.7 507.0,429.8 504.6,423.9 502.3,417.9 500.1,411.9 498.0,405.8 495.9,399.7 494.0,393.6 492.1,387.4 490.3,381.2 488.6,374.9 487.1,368.5 485.6,362.1 484.2,355.7 483.0,349.1 481.8,342.6 480.8,335.9 479.9,329.1 479.1,322.3 478.4,315.4 477.9,308.5 477.4,301.5 477.0,294.5 476.6,287.4 476.4,280.3 476.3,273.1 476.3,265.9 476.3,258.6 476.5,251.2 476.7,243.8 477.0,236.4 477.5,228.9 478.0,221.4 478.6,213.8 479.3,206.1 480.1,198.4 481.0,190.7 481.9,182.9 483.0,175.0 484.2,167.1 485.4,159.1 486.8,151.1 488.2,143.0 489.7,134.9 491.3,126.7 493.1,118.5 494.9,110.2 496.8,101.8 498.8,93.4 500.8,84.9 503.0,76.4 505.3,67.8 507.7,59.2 510.1,50.5" stroke="#800000"/>
<polyline points="927.1,751.5 918.2,747.9 909.4,744.2 900.8,740.5 892.2,736.7 883.8,732.8 875.6,728.9 867.5,724.9 859.5,720.9 851.6,716.8 843.9,712.6 836.3,708.3 828.9,704.0 821.5,699.7 814.2,695.4 806.9,691.1 799.6,686.9 792.5,682.6 785.4,678.3 778.4,674.0 771.4,669.7 764.6,665.3 757.9,660.9 751.3,656.5 744.7,652.1 738.2,647.6 731.8,643.2 725.6,638.6 719.4,634.1 713.3,629.4 707.4,624.8 701.5,620.1 695.7,615.3 690.1,610.6 684.5,605.8 679.0,600.9 673.6,596.1 668.2,591.2 663.0,586.3 657.8,581.4 652.7,576.4 647.7,571.5 642.7,566.5 637.9,561.5 633.1,556.5 628.4,551.4 623.8,546.3 619.3,541.2 614.9,536.0 610.6,530.7 606.4,525.5 602.3,520.1 598.2,514.8 594.3,509.4 590.4,504.0 586.7,498.5 583.0,493.0 579.4,487.5 576.0,481.9 572.6,476.3 569.3,470.6 566.1,464.9 563.0,459.1 560.0,453.3 557.0,447.5 554.2,441.6 551.4,435.7 548.7,429.8 546.1,423.9 543.6,417.9 541.1,411.9 538.8,405.8 536.5,399.7 534.3,393.6 532.2,387.4 530.2,381.2 528.3,374.9 526.5,368.5 524.8,362.1 523.2,355.7 521.7,349.1 520.4,342.6 519.1,335.9 518.0,329.1 517.0,322.3 516.1,315.4 515.3,308.5 514.6,301.5 514.0,294.5 513.5,287.4 513.1,280.3 512.7,273.1 512.5,265.9 512.3,258.6 512.3,251.2 512.3,243.8 512.4,236.4 512.7,228.9 513.0,221.4 513.4,213.8 513.9,206.1 514.5,198.4 515.2,190.7 516.0,182.9 516.8,175.0 517.8,167.1 518.9,159.1 520.0,151.1 521.3,143.0 522.6,134.9 524.1,126.7 525.6,118.5 527.2,110.2 528.9,101.8 530.7,93.4 532.6,84.9 534.6,76.4 536.7,67.8 538.9,59.2 541.2,50.5" stroke="#800000"/>
<polyline points="988.1,751.5 978.9,747.9 969.7,744.2 960.7,740.5 951.9,736.7 943.1,732.8 934.6,728.9 926.1,724.9 917.8,720.9 909.6,716.8 901.5,712.6 893.7,708.3 885.9,704.0 878.2,699.7 870.5,695.4 862.9,691.1 855.4,686.9 847.9,682.6 840.5,678.3 833.1,674.0 825.9,669.7 818.8,665.3 811.8,660.9 804.8,656.5 797.9,652.1 791.2,647.6 784.5,643.2 777.9,638.6 771.4,634.1 765.1,629.4 758.8,624.8 752.7,620.1 746.6,615.3 740.7,610.6 734.8,605.8 729.0,600.9 723.3,596.1 717.7,591.2 712.2,586.3 706.7,581.4 701.3,576.4 696.0,571.5 690.8,566.5 685.7,561.5 680.6,556.5 675.6,551.4 670.8,546.3 666.0,541.2 661.3,536.0 656.8,530.7 652.3,525.5 648.0,520.1 643.7,514.8 639.5,509.4 635.4,504.0 631.4,498.5 627.4,493.0 623.6,487.5 619.9,481.9 616.2,476.3 612.7,470.6 609.2,464.9 605.9,459.1 602.6,453.3 599.5,447.5 596.4,441.6 593.4,435.7 590.5,429.8 587.6,423.9 584.8,417.9 582.2,411.9 579.6,405.8 577.1,399.7 574.6,393.6 572.3,387.4 570.1,381.2 568.0,374.9 565.9,368.5 564.0,362.1 562.2,355.7 560.5,349.1 558.9,342.6 557.5,335.9 556.1,329.1 554.9,322.3 553.8,315.4 552.8,308.5 551.9,301.5 551.0,294.5 550.3,287.4 549.7,280.3 549.1,273.1 548.7,265.9 548.3,258.6 548.1,251.2 547.9,243.8 547.8,236.4 547.9,228.9 548.0,221.4 548.2,213.8 548.5,206.1 548.9,198.4 549.4,190.7 550.0,182.9 550.7,175.0 551.4,167.1 552.3,159.1 553.3,151.1 554.3,143.0 555.5,134.9 556.8,126.7 558.1,118.5 559.5,110.2 561.1,101.8 562.7,93.4 564.4,84.9 566.2,76.4 568.2,67.8 570.2,59.2 572.3,50.5" stroke="#800000"/>
<line x1="-667.5" y1="749.5" x2="31.5" y2="50.5" stroke="#fff"/>
<line x1="-607.5" y1="749.5" x2="91.5" y2="50.5" stroke="#fff"/>
<line x1="-547.5" y1="749.5" x2="151.5" y2="50.5" stroke="#fff"/>
<line x1="-487.5" y1="749.5" x2="211.5" y2="50.5" stroke="#fff"/>
<line x1="-427.5" y1="749.5" x2="271.5" y2="50.5" stroke="#fff"/>
<line x1="-367.5" y1="749.5" x2="331.5" y2="50.5" stroke="#fff"/>
<line x1="-307.5" y1="749.5" x2="391.5" y2="50.5" stroke="#fff"/>
<line x1="-247.5" y1="749.5" x2="451.5" y2="50.5" stroke="#fff"/>
<line x1="-187.5" y1="749.5" x2="511.5" y2="50.5" stroke="#fff"/>
<line x1="-127.5" y1="749.5" x2="571.5" y2="50.5" stroke="#fff"/>
<line x1="-67.5" y1="749.5" x2="631.5" y2="50.5" stroke="#fff"/>
<line x1="-7.5" y1="749.5" x2="691.5" y2="50.5" stroke="#fff"/>
<line x1="52.5" y1="749.5" x2="751.5" y2="50.5" stroke="#fff"/>
<line x1="112.5" y1="749.5" x2="811.5" y2="50.5" stroke="#fff"/>
<line x1="172.5" y1="749.5" x2="871.5" y2="50.5" stroke="#fff"/>
<line x1="232.5" y1="749.5" x2="931.5" y2="50.5" stroke="#fff"/>
<line x1="292.5" y1="749.5" x2="991.5" y2="50.5" stroke="#fff"/>
<line x1="352.5" y1="749.5" x2="1051.5" y2="50.5" stroke="#fff"/>
<line x1="412.5" y1="749.5" x2="1111.5" y2="50.5" stroke="#fff"/>
<line x1="472.5" y1="749.5" x2="1171.5" y2="50.5" stroke="#fff"/>
<line x1="532.5" y1="749.5" x2="1231.5" y2="50.5" stroke="#fff"/>
<line x1="592.5" y1="749.5" x2="1291.5" y2="50.5" stroke="#fff"/>
<line x1="652.5" y1="749.5" x2="1351.5" y2="50.5" stroke="#fff"/>
</g>
<g shape-rendering="crispEdges" stroke="#fff" stroke-width="1">
<line x1="56" y1="50.5" x2="667" y2="50.5"/>
<line x1="56" y1="321.5" x2="667" y2="321.5"/>
<line x1="56" y1="449.5" x2="667" y2="449.5"/>
<line x1="56" y1="529.5" x2="667" y2="529.5"/>
<line x1="56" y1="586.5" x2="667" y2="586.5"/>
<line x1="56" y1="630.5" x2="667" y2="630.5"/>
<line x1="56" y1="665.5" x2="667" y2="665.5"/>
<line x1="56" y1="694.5" x2="667" y2="694.5"/>
<line x1="56" y1="719.5" x2="667" y2="719.5"/>
<line x1="56" y1="740.5" x2="667" y2="740.5"/>
<line x1="61.5" y1="50" x2="61.5" y2="754"/>
<path d="M61 648.5h4M61 657.5h4"/>
<line x1="661.5" y1="50" x2="661.5" y2="754"/>
<line x1="61" y1="749.5" x2="662" y2="749.5"/>
<line x1="61.5" y1="749" x2="61.5" y2="754"/>
<line x1="61.5" y1="788" x2="61.5" y2="793"/>
<line x1="61.5" y1="826" x2="61.5" y2="831"/>
<line x1="121.5" y1="749" x2="121.5" y2="754"/>
<line x1="121.5" y1="788" x2="121.5" y2="793"/>
<line x1="121.5" y1="826" x2="121.5" y2="831"/>
<line x1="181.5" y1="749" x2="181.5" y2="754"/>
<line x1="181.5" y1="788" x2="181.5" y2="793"/>
<line x1="181.5" y1="826" x2="181.5" y2="831"/>
<line x1="241.5" y1="749" x2="241.5" y2="754"/>
<line x1="241.5" y1="788" x2="241.5" y2="793"/>
<line x1="241.5" y1="826" x2="241.5" y2="831"/>
<line x1="301.5" y1="749" x2="301.5" y2="754"/>
<line x1="301.5" y1="788" x2="301.5" y2="793"/>
<line x1="301.5" y1="826" x2="301.5" y2="831"/>
<line x1="361.5" y1="749" x2="361.5" y2="754"/>
<line x1="361.5" y1="788" x2="361.5" y2="793"/>
<line x1="361.5" y1="826" x2="361.5" y2="831"/>
<line x1="421.5" y1="749" x2="421.5" y2="754"/>
<line x1="421.5" y1="788" x2="421.5" y2="793"/>
<line x1="421.5" y1="826" x2="421.5" y2="831"/>
<line x1="481.5" y1="749" x2="481.5" y2="754"/>
<line x1="481.5" y1="788" x2="481.5" y2="793"/>
<line x1="481.5" y1="826" x2="481.5" y2="831"/>
<line x1="541.5" y1="749" x2="541.5" y2="754"/>
<line x1="541.5" y1="788" x2="541.5" y2="793"/>
<line x1="541.5" y1="826" x2="541.5" y2="831"/>
<line x1="601.5" y1="749" x2="601.5" y2="754"/>
<line x1="601.5" y1="788" x2="601.5" y2="793"/>
<line x1="601.5" y1="826" x2="601.5" y2="831"/>
<line x1="661.5" y1="749" x2="661.5" y2="754"/>
<line x1="661.5" y1="788" x2="661.5" y2="793"/>
<line x1="661.5" y1="826" x2="661.5" y2="831"/>
<line x1="61.5" y1="864" x2="61.5" y2="868"/>
<line x1="136.5" y1="864" x2="136.5" y2="868"/>
<line x1="211.5" y1="864" x2="211.5" y2="868"/>
<line x1="286.5" y1="864" x2="286.5" y2="868"/>
<line x1="361.5" y1="864" x2="361.5" y2="868"/>
<line x1="436.5" y1="864" x2="436.5" y2="868"/>
<line x1="511.5" y1="864" x2="511.5" y2="868"/>
<line x1="586.5" y1="864" x2="586.5" y2="868"/>
<line x1="661.5" y1="864" x2="661.5" y2="868"/>
</g>
<g clip-path="url(#cf)" shape-rendering="crispEdges">
<polygon points="463.0,672.1 457.1,666.0 448.9,657.7 448.8,648.8 440.9,640.9 434.8,620.9 430.4,611.0 428.5,598.6 424.7,574.6 422.4,560.9 420.2,545.9 409.1,512.7 404.0,494.2 398.8,473.2 388.3,424.0 387.1,394.8 388.5,360.9 388.5,356.5 388.5,356.5 391.8,388.9 401.0,430.5 407.7,452.6 416.5,485.0 422.4,507.1 428.3,527.8 438.0,560.5 446.2,590.8 453.1,628.7 456.3,637.5 460.1,661.5 462.4,673.3" fill="#008000" stroke="none"/>
<polygon points="518.0,733.9 511.5,728.9 507.8,722.3 500.9,715.0 494.5,708.0 484.5,697.9 471.2,684.9 463.0,672.1 462.4,673.3 464.3,694.2 467.5,697.3 520.5,733.9" fill="#900000" stroke="none"/>
<line x1="61" y1="692.5" x2="625" y2="692.5" stroke="#ff00ff" stroke-width="1"/>
<polyline points="542.5,733.9 469.3,683.3 469.3,663.1 465.8,645.5 463.9,631.2 456.3,587.0 449.3,560.5 443.0,532.2 432.7,492.4 422.4,452.6 415.8,430.5 409.1,391.9 401.8,322.5 400.7,318.8 400.7,302.5 402.2,246.5 405.9,215.5 410.3,190.5 417.9,152.9 424.2,127.6 432.9,89.7 440.0,66.0 446.0,50.5" stroke="#ffb0ff" stroke-width="1" fill="none"/>
<polyline points="520.5,733.9 467.5,697.3 464.3,694.2 462.4,673.3 460.1,661.5 456.3,637.5 453.1,628.7 446.2,590.8 438.0,560.5 428.3,527.8 422.4,507.1 416.5,485.0 407.7,452.6 401.0,430.5 391.8,388.9 388.5,356.5 387.0,341.8 386.3,300.5 386.0,293.7 388.2,252.4 391.1,227.4 396.3,190.5 402.9,159.2 411.6,121.3 422.6,83.4 432.9,50.5" stroke="#ff00ff" stroke-width="1" fill="none"/>
<polyline points="440.9,733.9 464.3,694.2" stroke="#ff00ff" stroke-width="1" fill="none"/>
<polyline points="61.5,671.9 106.0,685.9 95.1,697.6 97.5,707.4 123.1,715.2 149.5,722.1 194.2,728.7 198.9,733.5 203.2,733.5" stroke="#e07000" stroke-width="1" fill="none"/>
<polyline points="61.5,686.1 76.7,697.5 132.0,707.8 160.0,715.0 187.1,722.1 194.6,728.2 199.5,733.5 235.8,733.5" stroke="#ffff00" stroke-width="1" fill="none"/>
<polyline points="212.2,733.5 252.9,728.7 296.7,722.1 336.0,715.1 358.9,711.0 383.8,708.1 408.1,697.9 436.5,686.5 473.7,671.5 499.1,665.7 527.7,657.0" stroke="#c8c000" stroke-width="1" fill="none"/>
<polyline points="73.8,732.0 86.1,728.7 109.8,722.1 133.5,715.4 164.2,707.4 182.3,697.5 206.5,685.6 229.7,671.9 247.9,665.8 260.0,657.9 277.9,649.1 307.9,641.0 332.1,630.8 350.0,620.8 355.8,611.0 349.5,598.4 343.4,586.5 337.7,574.7 326.0,560.9 307.9,546.3 307.9,512.5 319.7,494.1 331.6,473.1 344.3,459.5 355.1,450.0 379.7,424.3 398.1,408.8 415.8,394.8 443.0,369.0 451.9,360.9 453.3,351.3 458.2,321.7 439.1,275.3 343.8,219.0 235.0,147.0 187.8,50.5" stroke="#00ff00" stroke-width="1" fill="none"/>
<polyline points="232.1,733.5 222.5,731.0 214.1,728.2 209.8,722.1 205.5,715.0 206.5,707.4 178.1,697.5 188.5,686.1 188.5,682.3 187.1,671.9 190.6,665.7 181.8,657.8 173.9,648.7 179.9,641.3 184.6,629.4 190.9,621.1 189.7,610.8 181.8,598.6 175.2,586.8 168.8,575.0 157.0,560.8 138.1,546.1 136.8,512.4 147.9,493.9 160.0,472.9 182.4,450.1 206.6,424.0 242.5,394.9 278.7,361.1 284.8,321.7 268.7,274.4 170.2,219.0 65.2,147.0 111.0,50.5" stroke="#ff0080" stroke-width="1" fill="none"/>
<polyline points="444.7,733.9 443.5,728.9 440.9,715.0 439.0,708.0 435.2,697.9 428.9,686.0 427.0,672.1 426.6,666.0 424.9,657.7 427.7,648.7 424.9,640.9 422.2,628.7 419.7,620.9 414.6,611.0 412.7,598.6 407.7,574.6 406.9,560.9 404.7,545.9 400.3,527.8 395.9,512.7 391.7,494.2 388.8,473.2 385.7,424.0 385.3,394.8 386.1,369.5 387.0,360.9 394.4,335.9 400.3,319.7 430.9,275.3 430.9,262.7 429.5,233.3 429.5,218.2 464.5,146.9 561.0,50.5" stroke="#00ffff" stroke-width="1" fill="none"/>
<polyline points="518.0,733.9 511.5,728.9 507.8,722.3 500.9,715.0 494.5,708.0 484.5,697.9 471.2,684.9 463.0,672.1 457.1,666.0 448.9,657.7 448.8,648.8 440.9,640.9 434.8,620.9 430.4,611.0 428.5,598.6 424.7,574.6 422.4,560.9 420.2,545.9 409.1,512.7 404.0,494.2 398.8,473.2 388.3,424.0 387.1,394.8 388.5,360.9 388.5,356.5 401.7,321.5 439.1,275.3 514.5,219.0 560.5,185.5 615.3,147.2 661.5,100.8 700.5,72.5" stroke="#ff0000" stroke-width="1" fill="none"/>
<path d="M104 685.5h5M106.5 683v5M93 697.5h5M95.5 695v5M95 707.5h5M97.5 705v5M121 715.5h5M123.5 713v5M147 722.5h5M149.5 720v5M201 733.5h5M203.5 731v5" stroke="#fff" stroke-width="1" fill="none"/>
<path d="M74 697.5h5M76.5 695v5M130 707.5h5M132.5 705v5M158 714.5h5M160.5 712v5M185 722.5h5M187.5 720v5" stroke="#fff" stroke-width="1" fill="none"/>
<path d="M197 733.5h5M199.5 731v5M200 733.5h5M202.5 731v5M209 733.5h5M211.5 731v5M215 733.5h5M217.5 731v5M220 733.5h5M222.5 731v5M224 733.5h5M226.5 731v5M228 733.5h5M230.5 731v5M233 733.5h5M235.5 731v5" stroke="#fff" stroke-width="1" fill="none"/>
<path d="M250 728.5h5M252.5 726v5M294 722.5h5M296.5 720v5M334 715.5h5M336.5 713v5M381 708.5h5M383.5 706v5M406 697.5h5M408.5 695v5M471 671.5h5M473.5 669v5M497 665.5h5M499.5 663v5" stroke="#fff" stroke-width="1" fill="none"/>
<path d="M71 732.5h5M73.5 730v5M84 728.5h5M86.5 726v5M107 722.5h5M109.5 720v5M131 715.5h5M133.5 713v5M162 707.5h5M164.5 705v5M180 697.5h5M182.5 695v5M204 685.5h5M206.5 683v5M227 671.5h5M229.5 669v5M245 665.5h5M247.5 663v5M258 657.5h5M260.5 655v5M275 649.5h5M277.5 647v5M305 640.5h5M307.5 638v5M330 630.5h5M332.5 628v5M348 620.5h5M350.5 618v5M353 610.5h5M355.5 608v5M347 598.5h5M349.5 596v5M335 574.5h5M337.5 572v5M324 560.5h5M326.5 558v5M305 546.5h5M307.5 544v5M305 512.5h5M307.5 510v5M317 494.5h5M319.5 492v5M329 473.5h5M331.5 471v5M353 450.5h5M355.5 448v5M377 424.5h5M379.5 422v5M413 394.5h5M415.5 392v5M449 360.5h5M451.5 358v5M437 275.5h5M439.5 273v5M341 218.5h5M343.5 216v5M232 146.5h5M234.5 144v5" stroke="#fff" stroke-width="1" fill="none"/>
<path d="M230 733.5h5M232.5 731v5M212 728.5h5M214.5 726v5M207 722.5h5M209.5 720v5M203 714.5h5M205.5 712v5M204 707.5h5M206.5 705v5M176 697.5h5M178.5 695v5M186 686.5h5M188.5 684v5M185 671.5h5M187.5 669v5M188 665.5h5M190.5 663v5M179 657.5h5M181.5 655v5M171 648.5h5M173.5 646v5M177 641.5h5M179.5 639v5M188 621.5h5M190.5 619v5M187 610.5h5M189.5 608v5M179 598.5h5M181.5 596v5M166 574.5h5M168.5 572v5M154 560.5h5M156.5 558v5M136 546.5h5M138.5 544v5M134 512.5h5M136.5 510v5M145 493.5h5M147.5 491v5M158 472.5h5M160.5 470v5M180 450.5h5M182.5 448v5M204 424.5h5M206.5 422v5M240 394.5h5M242.5 392v5M276 361.5h5M278.5 359v5M266 274.5h5M268.5 272v5M168 218.5h5M170.5 216v5M63 146.5h5M65.5 144v5" stroke="#fff" stroke-width="1" fill="none"/>
<path d="M442 733.5h5M444.5 731v5M441 728.5h5M443.5 726v5M438 714.5h5M440.5 712v5M436 708.5h5M438.5 706v5M433 697.5h5M435.5 695v5M426 686.5h5M428.5 684v5M424 672.5h5M426.5 670v5M422 657.5h5M424.5 655v5M425 648.5h5M427.5 646v5M422 640.5h5M424.5 638v5M417 620.5h5M419.5 618v5M412 610.5h5M414.5 608v5M410 598.5h5M412.5 596v5M405 574.5h5M407.5 572v5M404 560.5h5M406.5 558v5M402 545.5h5M404.5 543v5M393 512.5h5M395.5 510v5M389 494.5h5M391.5 492v5M386 473.5h5M388.5 471v5M383 424.5h5M385.5 422v5M383 394.5h5M385.5 392v5M384 360.5h5M386.5 358v5M428 275.5h5M430.5 273v5M427 218.5h5M429.5 216v5M462 146.5h5M464.5 144v5" stroke="#fff" stroke-width="1" fill="none"/>
<path d="M516 733.5h5M518.5 731v5M509 728.5h5M511.5 726v5M505 722.5h5M507.5 720v5M498 714.5h5M500.5 712v5M492 708.5h5M494.5 706v5M482 697.5h5M484.5 695v5M469 684.5h5M471.5 682v5M460 672.5h5M462.5 670v5M455 666.5h5M457.5 664v5M446 657.5h5M448.5 655v5M446 648.5h5M448.5 646v5M438 640.5h5M440.5 638v5M432 620.5h5M434.5 618v5M428 610.5h5M430.5 608v5M426 598.5h5M428.5 596v5M422 574.5h5M424.5 572v5M420 560.5h5M422.5 558v5M418 545.5h5M420.5 543v5M407 512.5h5M409.5 510v5M402 494.5h5M404.5 492v5M396 473.5h5M398.5 471v5M386 424.5h5M388.5 422v5M385 394.5h5M387.5 392v5M386 360.5h5M388.5 358v5M437 275.5h5M439.5 273v5M512 218.5h5M514.5 216v5M613 147.5h5M615.5 145v5" stroke="#fff" stroke-width="1" fill="none"/>
<rect x="354" y="707" width="8" height="7" fill="#c8c000"/>
<text x="358" y="713" font-size="8" fill="#3c3800" text-anchor="middle">1</text>
<rect x="432" y="683" width="8" height="7" fill="#c8c000"/>
<text x="436" y="689" font-size="8" fill="#3c3800" text-anchor="middle">2</text>
<rect x="524" y="653" width="8" height="7" fill="#c8c000"/>
<text x="528" y="659" font-size="8" fill="#3c3800" text-anchor="middle">3</text>
</g>
<g shape-rendering="crispEdges">
<rect x="67.5" y="607.5" width="43" height="17" fill="#000" stroke="#ffff00"/>
<rect x="67.5" y="636.5" width="57" height="17" fill="#000" stroke="#e07000"/>
<rect x="625.5" y="683.5" width="30" height="17" fill="#000" stroke="#ff00ff"/>
</g>
<g shape-rendering="crispEdges">
<line x1="761.5" y1="40" x2="761.5" y2="770" stroke="#00ff00"/>
<line x1="826.5" y1="40" x2="826.5" y2="770" stroke="#ff0080"/>
<path d="M761.5 146.5L732.5 152.0M761.5 219.0L733.5 224.8M761.5 275.3L733.5 282.5M761.5 321.8L732.5 327.0M761.5 360.8L732.7 366.1M761.5 394.7L732.7 400.2M761.5 423.7L732.7 429.3M761.5 449.6L733.5 455.9M761.5 472.9L733.5 478.7M761.5 493.9L733.5 501.2M761.5 512.6L733.5 519.8M761.5 529.8L733.5 536.8M761.5 545.5L733.5 553.3M761.5 560.9L733.5 568.6M761.5 574.9L733.7 583.7M761.5 587.1L733.7 595.7M761.5 598.5L733.5 608.0M761.5 611.0L734.5 621.2M761.5 621.0L735.7 632.8M761.5 630.9L737.1 645.0M761.5 641.0L738.5 656.6M761.5 648.8L741.2 666.5M761.5 657.8L744.5 679.1M761.5 665.8L745.5 688.3M761.5 671.9L744.5 694.8M761.5 685.9L747.0 708.7M761.5 697.5L744.0 719.8M761.5 707.4L741.5 727.4M761.5 715.2L739.5 733.2M761.5 722.1L743.5 746.1M761.5 728.5L732.5 729.8M761.5 731.0L739.5 744.0M761.5 733.5L748.2 707.3M761.5 733.5L747.5 746.5M826.5 146.5L820.5 175.2M826.5 219.0L798.5 226.0M826.5 275.3L799.1 283.5M826.5 321.8L798.5 327.5M826.5 360.8L797.8 366.1M826.5 394.7L798.5 401.0M826.5 423.7L798.5 429.9M826.5 449.6L798.7 456.5M826.5 472.9L798.7 481.7M826.5 493.9L799.3 504.9M826.5 512.6L800.5 525.8M826.5 529.8L801.0 543.1M826.5 545.5L801.5 559.5M826.5 560.9L801.8 573.9M826.5 574.9L801.8 589.5M826.5 587.1L801.8 601.0M826.5 598.5L801.8 613.3M826.5 611.0L802.5 627.1M826.5 621.3L806.5 641.3M826.5 631.2L811.8 655.2M826.5 641.0L819.2 669.1M826.5 648.8L826.5 660.8M826.5 657.8L836.0 686.3M826.5 665.8L842.1 696.3M826.5 671.9L841.5 699.9M826.5 685.2L847.6 707.3M826.5 697.9L851.5 714.5M826.5 708.1L854.7 721.5M826.5 715.2L856.3 724.5M826.5 722.1L856.5 725.5M826.5 728.5L856.5 726.5M826.5 731.0L856.5 727.5M826.5 733.5L855.5 728.0" stroke="#fff" fill="none"/>
</g>
<text x="61.5" y="29.0" font-size="16.5" fill="#fff" text-anchor="start" font-weight="bold" textLength="129.4" lengthAdjust="spacingAndGlyphs">Station: Payerne</text>
<text x="217.0" y="29.0" font-size="16.5" fill="#fff" text-anchor="start" font-weight="bold" textLength="127.6" lengthAdjust="spacingAndGlyphs">Date: 21.05.2009</text>
<text x="365.0" y="29.0" font-size="16.5" fill="#fff" text-anchor="start" font-weight="bold" textLength="94.0" lengthAdjust="spacingAndGlyphs">Time: 1130Z</text>
<text x="761.5" y="32.0" font-size="13.0" fill="#00ff00" text-anchor="middle" font-weight="bold" textLength="27.7" lengthAdjust="spacingAndGlyphs">OBS</text>
<text x="826.5" y="32.0" font-size="13.0" fill="#ff0080" text-anchor="middle" font-weight="bold" textLength="17.8" lengthAdjust="spacingAndGlyphs">SR</text>
<text x="52.0" y="54.5" font-size="14.0" fill="#fff" fill-opacity="0.85" text-anchor="end" textLength="19.8" lengthAdjust="spacingAndGlyphs">100</text>
<text x="52.0" y="325.5" font-size="14.0" fill="#fff" fill-opacity="0.85" text-anchor="end" textLength="19.8" lengthAdjust="spacingAndGlyphs">200</text>
<text x="52.0" y="453.5" font-size="14.0" fill="#fff" fill-opacity="0.85" text-anchor="end" textLength="19.8" lengthAdjust="spacingAndGlyphs">300</text>
<text x="52.0" y="533.5" font-size="14.0" fill="#fff" fill-opacity="0.85" text-anchor="end" textLength="19.8" lengthAdjust="spacingAndGlyphs">400</text>
<text x="52.0" y="590.5" font-size="14.0" fill="#fff" fill-opacity="0.85" text-anchor="end" textLength="19.8" lengthAdjust="spacingAndGlyphs">500</text>
<text x="52.0" y="634.5" font-size="14.0" fill="#fff" fill-opacity="0.85" text-anchor="end" textLength="19.8" lengthAdjust="spacingAndGlyphs">600</text>
<text x="52.0" y="669.5" font-size="14.0" fill="#fff" fill-opacity="0.85" text-anchor="end" textLength="19.8" lengthAdjust="spacingAndGlyphs">700</text>
<text x="52.0" y="698.5" font-size="14.0" fill="#fff" fill-opacity="0.85" text-anchor="end" textLength="19.8" lengthAdjust="spacingAndGlyphs">800</text>
<text x="52.0" y="723.5" font-size="14.0" fill="#fff" fill-opacity="0.85" text-anchor="end" textLength="19.8" lengthAdjust="spacingAndGlyphs">900</text>
<text x="52.0" y="744.5" font-size="14.0" fill="#fff" fill-opacity="0.85" text-anchor="end" textLength="26.4" lengthAdjust="spacingAndGlyphs">1000</text>
<text x="670.7" y="50.0" font-size="14.0" fill="#fff" fill-opacity="0.85" text-anchor="start" textLength="44.6" lengthAdjust="spacingAndGlyphs">16336m</text>
<text x="670.7" y="321.0" font-size="14.0" fill="#fff" fill-opacity="0.85" text-anchor="start" textLength="44.6" lengthAdjust="spacingAndGlyphs">12015m</text>
<text x="670.7" y="449.0" font-size="14.0" fill="#fff" fill-opacity="0.85" text-anchor="start" textLength="37.5" lengthAdjust="spacingAndGlyphs">9418m</text>
<text x="670.7" y="529.0" font-size="14.0" fill="#fff" fill-opacity="0.85" text-anchor="start" textLength="37.5" lengthAdjust="spacingAndGlyphs">7410m</text>
<text x="670.7" y="586.0" font-size="14.0" fill="#fff" fill-opacity="0.85" text-anchor="start" textLength="37.5" lengthAdjust="spacingAndGlyphs">5757m</text>
<text x="670.7" y="630.0" font-size="14.0" fill="#fff" fill-opacity="0.85" text-anchor="start" textLength="37.5" lengthAdjust="spacingAndGlyphs">4352m</text>
<text x="670.7" y="665.0" font-size="14.0" fill="#fff" fill-opacity="0.85" text-anchor="start" textLength="37.5" lengthAdjust="spacingAndGlyphs">3124m</text>
<text x="670.7" y="694.0" font-size="14.0" fill="#fff" fill-opacity="0.85" text-anchor="start" textLength="37.5" lengthAdjust="spacingAndGlyphs">2116m</text>
<text x="670.7" y="719.0" font-size="14.0" fill="#fff" fill-opacity="0.85" text-anchor="start" textLength="37.5" lengthAdjust="spacingAndGlyphs">1088m</text>
<text x="59.0" y="767.5" font-size="14.0" fill="#fff" fill-opacity="0.85" text-anchor="middle" textLength="17.2" lengthAdjust="spacingAndGlyphs">-50</text>
<text x="61.5" y="805.5" font-size="14.0" fill="#fff" fill-opacity="0.85" text-anchor="middle" textLength="6.6" lengthAdjust="spacingAndGlyphs">0</text>
<text x="61.5" y="843.0" font-size="14.0" fill="#fff" fill-opacity="0.85" text-anchor="middle" textLength="6.6" lengthAdjust="spacingAndGlyphs">0</text>
<text x="119.0" y="767.5" font-size="14.0" fill="#fff" fill-opacity="0.85" text-anchor="middle" textLength="17.2" lengthAdjust="spacingAndGlyphs">-40</text>
<text x="121.5" y="805.5" font-size="14.0" fill="#fff" fill-opacity="0.85" text-anchor="middle" textLength="13.2" lengthAdjust="spacingAndGlyphs">10</text>
<text x="121.5" y="843.0" font-size="14.0" fill="#fff" fill-opacity="0.85" text-anchor="middle" textLength="19.8" lengthAdjust="spacingAndGlyphs">300</text>
<text x="179.0" y="767.5" font-size="14.0" fill="#fff" fill-opacity="0.85" text-anchor="middle" textLength="17.2" lengthAdjust="spacingAndGlyphs">-30</text>
<text x="181.5" y="805.5" font-size="14.0" fill="#fff" fill-opacity="0.85" text-anchor="middle" textLength="13.2" lengthAdjust="spacingAndGlyphs">20</text>
<text x="181.5" y="843.0" font-size="14.0" fill="#fff" fill-opacity="0.85" text-anchor="middle" textLength="19.8" lengthAdjust="spacingAndGlyphs">600</text>
<text x="239.0" y="767.5" font-size="14.0" fill="#fff" fill-opacity="0.85" text-anchor="middle" textLength="17.2" lengthAdjust="spacingAndGlyphs">-20</text>
<text x="241.5" y="805.5" font-size="14.0" fill="#fff" fill-opacity="0.85" text-anchor="middle" textLength="13.2" lengthAdjust="spacingAndGlyphs">30</text>
<text x="241.5" y="843.0" font-size="14.0" fill="#fff" fill-opacity="0.85" text-anchor="middle" textLength="19.8" lengthAdjust="spacingAndGlyphs">900</text>
<text x="299.0" y="767.5" font-size="14.0" fill="#fff" fill-opacity="0.85" text-anchor="middle" textLength="17.2" lengthAdjust="spacingAndGlyphs">-10</text>
<text x="301.5" y="805.5" font-size="14.0" fill="#fff" fill-opacity="0.85" text-anchor="middle" textLength="13.2" lengthAdjust="spacingAndGlyphs">40</text>
<text x="301.5" y="843.0" font-size="14.0" fill="#fff" fill-opacity="0.85" text-anchor="middle" textLength="26.4" lengthAdjust="spacingAndGlyphs">1200</text>
<text x="361.5" y="767.5" font-size="14.0" fill="#fff" fill-opacity="0.85" text-anchor="middle" textLength="6.6" lengthAdjust="spacingAndGlyphs">0</text>
<text x="361.5" y="805.5" font-size="14.0" fill="#fff" fill-opacity="0.85" text-anchor="middle" textLength="13.2" lengthAdjust="spacingAndGlyphs">50</text>
<text x="361.5" y="843.0" font-size="14.0" fill="#fff" fill-opacity="0.85" text-anchor="middle" textLength="26.4" lengthAdjust="spacingAndGlyphs">1500</text>
<text x="421.5" y="767.5" font-size="14.0" fill="#fff" fill-opacity="0.85" text-anchor="middle" textLength="13.2" lengthAdjust="spacingAndGlyphs">10</text>
<text x="421.5" y="805.5" font-size="14.0" fill="#fff" fill-opacity="0.85" text-anchor="middle" textLength="13.2" lengthAdjust="spacingAndGlyphs">60</text>
<text x="421.5" y="843.0" font-size="14.0" fill="#fff" fill-opacity="0.85" text-anchor="middle" textLength="26.4" lengthAdjust="spacingAndGlyphs">1800</text>
<text x="481.5" y="767.5" font-size="14.0" fill="#fff" fill-opacity="0.85" text-anchor="middle" textLength="13.2" lengthAdjust="spacingAndGlyphs">20</text>
<text x="481.5" y="805.5" font-size="14.0" fill="#fff" fill-opacity="0.85" text-anchor="middle" textLength="13.2" lengthAdjust="spacingAndGlyphs">70</text>
<text x="481.5" y="843.0" font-size="14.0" fill="#fff" fill-opacity="0.85" text-anchor="middle" textLength="26.4" lengthAdjust="spacingAndGlyphs">2100</text>
<text x="541.5" y="767.5" font-size="14.0" fill="#fff" fill-opacity="0.85" text-anchor="middle" textLength="13.2" lengthAdjust="spacingAndGlyphs">30</text>
<text x="541.5" y="805.5" font-size="14.0" fill="#fff" fill-opacity="0.85" text-anchor="middle" textLength="13.2" lengthAdjust="spacingAndGlyphs">80</text>
<text x="541.5" y="843.0" font-size="14.0" fill="#fff" fill-opacity="0.85" text-anchor="middle" textLength="26.4" lengthAdjust="spacingAndGlyphs">2400</text>
<text x="601.5" y="767.5" font-size="14.0" fill="#fff" fill-opacity="0.85" text-anchor="middle" textLength="13.2" lengthAdjust="spacingAndGlyphs">40</text>
<text x="601.5" y="805.5" font-size="14.0" fill="#fff" fill-opacity="0.85" text-anchor="middle" textLength="13.2" lengthAdjust="spacingAndGlyphs">90</text>
<text x="601.5" y="843.0" font-size="14.0" fill="#fff" fill-opacity="0.85" text-anchor="middle" textLength="26.4" lengthAdjust="spacingAndGlyphs">2700</text>
<text x="661.5" y="767.5" font-size="14.0" fill="#fff" fill-opacity="0.85" text-anchor="middle" textLength="13.2" lengthAdjust="spacingAndGlyphs">50</text>
<text x="661.5" y="805.5" font-size="14.0" fill="#fff" fill-opacity="0.85" text-anchor="middle" textLength="19.8" lengthAdjust="spacingAndGlyphs">100</text>
<text x="661.5" y="843.0" font-size="14.0" fill="#fff" fill-opacity="0.85" text-anchor="middle" textLength="26.4" lengthAdjust="spacingAndGlyphs">3000</text>
<text x="59.0" y="880.0" font-size="14.0" fill="#fff" fill-opacity="0.85" text-anchor="middle" textLength="23.8" lengthAdjust="spacingAndGlyphs">-100</text>
<text x="134.0" y="880.0" font-size="14.0" fill="#fff" fill-opacity="0.85" text-anchor="middle" textLength="17.2" lengthAdjust="spacingAndGlyphs">-50</text>
<text x="211.5" y="880.0" font-size="14.0" fill="#fff" fill-opacity="0.85" text-anchor="middle" textLength="6.6" lengthAdjust="spacingAndGlyphs">0</text>
<text x="286.5" y="880.0" font-size="14.0" fill="#fff" fill-opacity="0.85" text-anchor="middle" textLength="13.2" lengthAdjust="spacingAndGlyphs">50</text>
<text x="361.5" y="880.0" font-size="14.0" fill="#fff" fill-opacity="0.85" text-anchor="middle" textLength="19.8" lengthAdjust="spacingAndGlyphs">100</text>
<text x="436.5" y="880.0" font-size="14.0" fill="#fff" fill-opacity="0.85" text-anchor="middle" textLength="19.8" lengthAdjust="spacingAndGlyphs">150</text>
<text x="511.5" y="880.0" font-size="14.0" fill="#fff" fill-opacity="0.85" text-anchor="middle" textLength="19.8" lengthAdjust="spacingAndGlyphs">200</text>
<text x="586.5" y="880.0" font-size="14.0" fill="#fff" fill-opacity="0.85" text-anchor="middle" textLength="19.8" lengthAdjust="spacingAndGlyphs">250</text>
<text x="661.5" y="880.0" font-size="14.0" fill="#fff" fill-opacity="0.85" text-anchor="middle" textLength="19.8" lengthAdjust="spacingAndGlyphs">300</text>
<text x="275.8" y="781.0" font-size="14.0" fill="#fff" fill-opacity="0.85" text-anchor="start" textLength="171.5" lengthAdjust="spacingAndGlyphs">Temperature, Dewpoint  [ °C]</text>
<text x="307.2" y="818.5" font-size="14.0" fill="#fff" fill-opacity="0.85" text-anchor="start" textLength="106.3" lengthAdjust="spacingAndGlyphs">Windspeed  [ knt]</text>
<text x="292.7" y="856.5" font-size="14.0" fill="#fff" fill-opacity="0.85" text-anchor="start" textLength="136.6" lengthAdjust="spacingAndGlyphs">CAPE, CINH * 5  [ J/kg]</text>
<text x="259.7" y="892.5" font-size="14.0" fill="#fff" fill-opacity="0.85" text-anchor="start" textLength="203.7" lengthAdjust="spacingAndGlyphs">Storm Relative Helicity  [ m^2/s^2 ]</text>
<text x="71.5" y="620.5" font-size="14.0" fill="#ffff00" fill-opacity="0.85" text-anchor="start" textLength="35.0" lengthAdjust="spacingAndGlyphs">CAPE</text>
<text x="71.0" y="649.5" font-size="14.0" fill="#e07000" fill-opacity="0.85" text-anchor="start" textLength="50.0" lengthAdjust="spacingAndGlyphs">CINH * 5</text>
<text x="629.8" y="697.0" font-size="14.0" fill="#ff00ff" fill-opacity="0.85" text-anchor="start" textLength="22.2" lengthAdjust="spacingAndGlyphs">LCL</text>
<text x="894.6" y="40.0" font-size="14.0" fill="#fff" fill-opacity="0.85" text-anchor="start" textLength="59.8" lengthAdjust="spacingAndGlyphs">Parameter</text>
<rect x="894.6" y="41" width="59.8" height="1" fill="#fff"/>
<text x="1123.5" y="40.0" font-size="14.0" fill="#fff" fill-opacity="0.85" text-anchor="end" textLength="60.0" lengthAdjust="spacingAndGlyphs">Value LCL</text>
<rect x="1063.5" y="41" width="60.0" height="1" fill="#fff"/>
<text x="1213.5" y="40.0" font-size="14.0" fill="#fff" fill-opacity="0.85" text-anchor="end" textLength="62.0" lengthAdjust="spacingAndGlyphs">Value CCL</text>
<rect x="1151.5" y="41" width="62.0" height="1" fill="#fff"/>
<text x="1230.5" y="40.0" font-size="14.0" fill="#fff" fill-opacity="0.85" text-anchor="start" textLength="22.8" lengthAdjust="spacingAndGlyphs">Unit</text>
<rect x="1230.5" y="41" width="22.8" height="1" fill="#fff"/>
<text x="894.6" y="62.0" font-size="14.0" fill="#fff" fill-opacity="0.85" text-anchor="start" textLength="142.1" lengthAdjust="spacingAndGlyphs">Convective Temperature:</text>
<text x="1123.5" y="62.0" font-size="14.0" fill="#ff0000" fill-opacity="0.85" text-anchor="end" textLength="30.9" lengthAdjust="spacingAndGlyphs">28.95</text>
<text x="1230.5" y="62.0" font-size="14.0" fill="#fff" fill-opacity="0.85" text-anchor="start" textLength="21.5" lengthAdjust="spacingAndGlyphs">[°C]</text>
<text x="894.6" y="79.0" font-size="14.0" fill="#fff" fill-opacity="0.85" text-anchor="start" textLength="92.6" lengthAdjust="spacingAndGlyphs">Snowfall Height:</text>
<text x="1123.5" y="79.0" font-size="14.0" fill="#ffffff" fill-opacity="0.85" text-anchor="end" textLength="44.7" lengthAdjust="spacingAndGlyphs">3184.79</text>
<text x="1230.5" y="79.0" font-size="14.0" fill="#fff" fill-opacity="0.85" text-anchor="start" textLength="17.8" lengthAdjust="spacingAndGlyphs">[m]</text>
<text x="894.6" y="104.0" font-size="14.0" fill="#fff" fill-opacity="0.85" text-anchor="start" textLength="253.3" lengthAdjust="spacingAndGlyphs">Parcels: Using 50mB mean layer LCL + CCL</text>
<rect x="894.6" y="105" width="253.3" height="1" fill="#fff"/>
<text x="894.6" y="124.0" font-size="14.0" fill="#fff" fill-opacity="0.85" text-anchor="start" textLength="69.8" lengthAdjust="spacingAndGlyphs">Lifted Index:</text>
<text x="1123.5" y="124.0" font-size="14.0" fill="#ff0000" fill-opacity="0.85" text-anchor="end" textLength="28.2" lengthAdjust="spacingAndGlyphs">-2.82</text>
<text x="1213.5" y="124.0" font-size="14.0" fill="#ff0000" fill-opacity="0.85" text-anchor="end" textLength="28.2" lengthAdjust="spacingAndGlyphs">-4.75</text>
<text x="1230.5" y="124.0" font-size="14.0" fill="#fff" fill-opacity="0.85" text-anchor="start" textLength="21.5" lengthAdjust="spacingAndGlyphs">[°C]</text>
<text x="894.6" y="141.0" font-size="14.0" fill="#fff" fill-opacity="0.85" text-anchor="start" textLength="38.4" lengthAdjust="spacingAndGlyphs">CAPE:</text>
<text x="1123.5" y="141.0" font-size="14.0" fill="#ff0000" fill-opacity="0.85" text-anchor="end" textLength="37.8" lengthAdjust="spacingAndGlyphs">712.91</text>
<text x="1213.5" y="141.0" font-size="14.0" fill="#ff0000" fill-opacity="0.85" text-anchor="end" textLength="44.7" lengthAdjust="spacingAndGlyphs">1487.57</text>
<text x="1230.5" y="141.0" font-size="14.0" fill="#fff" fill-opacity="0.85" text-anchor="start" textLength="30.6" lengthAdjust="spacingAndGlyphs">[J/kg]</text>
<text x="894.6" y="158.0" font-size="14.0" fill="#fff" fill-opacity="0.85" text-anchor="start" textLength="34.9" lengthAdjust="spacingAndGlyphs">CINH:</text>
<text x="1123.5" y="158.0" font-size="14.0" fill="#ffff00" fill-opacity="0.85" text-anchor="end" textLength="37.8" lengthAdjust="spacingAndGlyphs">125.15</text>
<text x="1230.5" y="158.0" font-size="14.0" fill="#fff" fill-opacity="0.85" text-anchor="start" textLength="30.6" lengthAdjust="spacingAndGlyphs">[J/kg]</text>
<text x="894.6" y="175.0" font-size="14.0" fill="#fff" fill-opacity="0.85" text-anchor="start" textLength="64.5" lengthAdjust="spacingAndGlyphs">CAPE Virt.:</text>
<text x="1123.5" y="175.0" font-size="14.0" fill="#ff0000" fill-opacity="0.85" text-anchor="end" textLength="37.8" lengthAdjust="spacingAndGlyphs">753.78</text>
<text x="1213.5" y="175.0" font-size="14.0" fill="#ff0000" fill-opacity="0.85" text-anchor="end" textLength="44.7" lengthAdjust="spacingAndGlyphs">1350.98</text>
<text x="1230.5" y="175.0" font-size="14.0" fill="#fff" fill-opacity="0.85" text-anchor="start" textLength="30.6" lengthAdjust="spacingAndGlyphs">[J/kg]</text>
<text x="894.6" y="192.0" font-size="14.0" fill="#fff" fill-opacity="0.85" text-anchor="start" textLength="60.9" lengthAdjust="spacingAndGlyphs">CINH Virt.:</text>
<text x="1123.5" y="192.0" font-size="14.0" fill="#ffff00" fill-opacity="0.85" text-anchor="end" textLength="37.8" lengthAdjust="spacingAndGlyphs">101.50</text>
<text x="1230.5" y="192.0" font-size="14.0" fill="#fff" fill-opacity="0.85" text-anchor="start" textLength="30.6" lengthAdjust="spacingAndGlyphs">[J/kg]</text>
<text x="894.6" y="209.0" font-size="14.0" fill="#fff" fill-opacity="0.85" text-anchor="start" textLength="138.4" lengthAdjust="spacingAndGlyphs">DCAPE (LFS = 525mB):</text>
<text x="1123.5" y="209.0" font-size="14.0" fill="#ff0000" fill-opacity="0.85" text-anchor="end" textLength="37.8" lengthAdjust="spacingAndGlyphs">603.00</text>
<text x="1230.5" y="209.0" font-size="14.0" fill="#fff" fill-opacity="0.85" text-anchor="start" textLength="30.6" lengthAdjust="spacingAndGlyphs">[J/kg]</text>
<text x="894.6" y="226.0" font-size="14.0" fill="#fff" fill-opacity="0.85" text-anchor="start" textLength="119.6" lengthAdjust="spacingAndGlyphs">850-600 Lapse Rate:</text>
<text x="1123.5" y="226.0" font-size="14.0" fill="#ff0000" fill-opacity="0.85" text-anchor="end" textLength="30.9" lengthAdjust="spacingAndGlyphs">22.24</text>
<text x="1230.5" y="226.0" font-size="14.0" fill="#fff" fill-opacity="0.85" text-anchor="start" textLength="21.5" lengthAdjust="spacingAndGlyphs">[°C]</text>
<text x="894.6" y="243.0" font-size="14.0" fill="#fff" fill-opacity="0.85" text-anchor="start" textLength="144.5" lengthAdjust="spacingAndGlyphs">Fawbush-Miller Hail Size:</text>
<text x="1123.5" y="243.0" font-size="14.0" fill="#ffff00" fill-opacity="0.85" text-anchor="end" textLength="45.3" lengthAdjust="spacingAndGlyphs">1.3 - 1.9</text>
<text x="1230.5" y="243.0" font-size="14.0" fill="#fff" fill-opacity="0.85" text-anchor="start" textLength="24.2" lengthAdjust="spacingAndGlyphs">[cm]</text>
<text x="894.6" y="260.0" font-size="14.0" fill="#fff" fill-opacity="0.85" text-anchor="start" textLength="138.1" lengthAdjust="spacingAndGlyphs">Sig. Hail Param. (SHIP):</text>
<text x="1123.5" y="260.0" font-size="14.0" fill="#00ff00" fill-opacity="0.85" text-anchor="end" textLength="24.0" lengthAdjust="spacingAndGlyphs">0.84</text>
<text x="1230.5" y="260.0" font-size="14.0" fill="#fff" fill-opacity="0.85" text-anchor="start" textLength="14.2" lengthAdjust="spacingAndGlyphs">[1]</text>
<text x="894.6" y="277.0" font-size="14.0" fill="#fff" fill-opacity="0.85" text-anchor="start" textLength="182.2" lengthAdjust="spacingAndGlyphs">Max. Hail Size (new, new2, old):</text>
<text x="1123.5" y="277.0" font-size="14.0" fill="#ff0000" fill-opacity="0.85" text-anchor="end" textLength="24.0" lengthAdjust="spacingAndGlyphs">5.83</text>
<text x="1124.5" y="277.0" font-size="14.0" fill="#fff" fill-opacity="0.85" text-anchor="start" textLength="3.4" lengthAdjust="spacingAndGlyphs">,</text>
<text x="1160.5" y="277.0" font-size="14.0" fill="#ff0000" fill-opacity="0.85" text-anchor="end" textLength="24.0" lengthAdjust="spacingAndGlyphs">4.75</text>
<text x="1161.5" y="277.0" font-size="14.0" fill="#fff" fill-opacity="0.85" text-anchor="start" textLength="3.4" lengthAdjust="spacingAndGlyphs">,</text>
<text x="1196.0" y="277.0" font-size="14.0" fill="#ff0000" fill-opacity="0.85" text-anchor="end" textLength="24.0" lengthAdjust="spacingAndGlyphs">5.31</text>
<text x="1230.5" y="277.0" font-size="14.0" fill="#fff" fill-opacity="0.85" text-anchor="start" textLength="24.2" lengthAdjust="spacingAndGlyphs">[cm]</text>
<text x="894.6" y="297.0" font-size="14.0" fill="#fff" fill-opacity="0.85" text-anchor="start" textLength="100.1" lengthAdjust="spacingAndGlyphs">LCL / CCL (AGL):</text>
<text x="1123.5" y="297.0" font-size="14.0" fill="#ffff00" fill-opacity="0.85" text-anchor="end" textLength="44.7" lengthAdjust="spacingAndGlyphs">1739.88</text>
<text x="1213.5" y="297.0" font-size="14.0" fill="#00ff00" fill-opacity="0.85" text-anchor="end" textLength="44.7" lengthAdjust="spacingAndGlyphs">2165.09</text>
<text x="1230.5" y="297.0" font-size="14.0" fill="#fff" fill-opacity="0.85" text-anchor="start" textLength="17.8" lengthAdjust="spacingAndGlyphs">[m]</text>
<text x="894.6" y="314.0" font-size="14.0" fill="#fff" fill-opacity="0.85" text-anchor="start" textLength="107.5" lengthAdjust="spacingAndGlyphs">Convective Height:</text>
<text x="1123.5" y="314.0" font-size="14.0" fill="#ff0000" fill-opacity="0.85" text-anchor="end" textLength="24.0" lengthAdjust="spacingAndGlyphs">9.16</text>
<text x="1213.5" y="314.0" font-size="14.0" fill="#ff0000" fill-opacity="0.85" text-anchor="end" textLength="24.0" lengthAdjust="spacingAndGlyphs">9.38</text>
<text x="1230.5" y="314.0" font-size="14.0" fill="#fff" fill-opacity="0.85" text-anchor="start" textLength="24.2" lengthAdjust="spacingAndGlyphs">[km]</text>
<text x="894.6" y="339.0" font-size="14.0" fill="#fff" fill-opacity="0.85" text-anchor="start" textLength="107.5" lengthAdjust="spacingAndGlyphs">Convective Indices</text>
<rect x="894.6" y="340" width="107.5" height="1" fill="#fff"/>
<text x="894.6" y="359.0" font-size="14.0" fill="#fff" fill-opacity="0.85" text-anchor="start" textLength="95.4" lengthAdjust="spacingAndGlyphs">Showalter Index:</text>
<text x="1123.5" y="359.0" font-size="14.0" fill="#ff0000" fill-opacity="0.85" text-anchor="end" textLength="28.2" lengthAdjust="spacingAndGlyphs">-1.82</text>
<text x="1230.5" y="359.0" font-size="14.0" fill="#fff" fill-opacity="0.85" text-anchor="start" textLength="21.5" lengthAdjust="spacingAndGlyphs">[°C]</text>
<text x="894.6" y="376.0" font-size="14.0" fill="#fff" fill-opacity="0.85" text-anchor="start" textLength="150.7" lengthAdjust="spacingAndGlyphs">Modified Thompson Index:</text>
<text x="1123.5" y="376.0" font-size="14.0" fill="#ff0000" fill-opacity="0.85" text-anchor="end" textLength="30.9" lengthAdjust="spacingAndGlyphs">43.50</text>
<text x="1230.5" y="376.0" font-size="14.0" fill="#fff" fill-opacity="0.85" text-anchor="start" textLength="21.5" lengthAdjust="spacingAndGlyphs">[°C]</text>
<text x="894.6" y="393.0" font-size="14.0" fill="#fff" fill-opacity="0.85" text-anchor="start" textLength="102.3" lengthAdjust="spacingAndGlyphs">Total Totals Index:</text>
<text x="1123.5" y="393.0" font-size="14.0" fill="#ff0000" fill-opacity="0.85" text-anchor="end" textLength="30.9" lengthAdjust="spacingAndGlyphs">53.63</text>
<text x="1230.5" y="393.0" font-size="14.0" fill="#fff" fill-opacity="0.85" text-anchor="start" textLength="21.5" lengthAdjust="spacingAndGlyphs">[°C]</text>
<text x="894.6" y="410.0" font-size="14.0" fill="#fff" fill-opacity="0.85" text-anchor="start" textLength="56.9" lengthAdjust="spacingAndGlyphs">KO Index:</text>
<text x="1123.5" y="410.0" font-size="14.0" fill="#ff0000" fill-opacity="0.85" text-anchor="end" textLength="35.0" lengthAdjust="spacingAndGlyphs">-12.64</text>
<text x="1230.5" y="410.0" font-size="14.0" fill="#fff" fill-opacity="0.85" text-anchor="start" textLength="14.2" lengthAdjust="spacingAndGlyphs">[1]</text>
<text x="894.6" y="427.0" font-size="14.0" fill="#fff" fill-opacity="0.85" text-anchor="start" textLength="125.3" lengthAdjust="spacingAndGlyphs">Craven SigSvr / 1000:</text>
<text x="1123.5" y="427.0" font-size="14.0" fill="#ff0000" fill-opacity="0.85" text-anchor="end" textLength="30.9" lengthAdjust="spacingAndGlyphs">16.23</text>
<text x="1230.5" y="427.0" font-size="14.0" fill="#fff" fill-opacity="0.85" text-anchor="start" textLength="54.0" lengthAdjust="spacingAndGlyphs">[m^3/s^3]</text>
<text x="894.6" y="444.0" font-size="14.0" fill="#fff" fill-opacity="0.85" text-anchor="start" textLength="112.2" lengthAdjust="spacingAndGlyphs">SCP RM (new, old):</text>
<text x="1123.5" y="444.0" font-size="14.0" fill="#ff0000" fill-opacity="0.85" text-anchor="end" textLength="24.0" lengthAdjust="spacingAndGlyphs">2.26</text>
<text x="1124.5" y="444.0" font-size="14.0" fill="#ffffff" fill-opacity="0.85" text-anchor="start" textLength="3.4" lengthAdjust="spacingAndGlyphs">,</text>
<text x="1160.5" y="444.0" font-size="14.0" fill="#ff0000" fill-opacity="0.85" text-anchor="end" textLength="24.0" lengthAdjust="spacingAndGlyphs">3.68</text>
<text x="1230.5" y="444.0" font-size="14.0" fill="#fff" fill-opacity="0.85" text-anchor="start" textLength="14.2" lengthAdjust="spacingAndGlyphs">[1]</text>
<text x="894.6" y="461.0" font-size="14.0" fill="#fff" fill-opacity="0.85" text-anchor="start" textLength="110.1" lengthAdjust="spacingAndGlyphs">SCP LM (new, old):</text>
<text x="1123.5" y="461.0" font-size="14.0" fill="#00ff00" fill-opacity="0.85" text-anchor="end" textLength="24.0" lengthAdjust="spacingAndGlyphs">0.10</text>
<text x="1124.5" y="461.0" font-size="14.0" fill="#ffffff" fill-opacity="0.85" text-anchor="start" textLength="3.4" lengthAdjust="spacingAndGlyphs">,</text>
<text x="1160.5" y="461.0" font-size="14.0" fill="#ffff00" fill-opacity="0.85" text-anchor="end" textLength="24.0" lengthAdjust="spacingAndGlyphs">0.39</text>
<text x="1230.5" y="461.0" font-size="14.0" fill="#fff" fill-opacity="0.85" text-anchor="start" textLength="14.2" lengthAdjust="spacingAndGlyphs">[1]</text>
<text x="894.6" y="478.0" font-size="14.0" fill="#fff" fill-opacity="0.85" text-anchor="start" textLength="87.3" lengthAdjust="spacingAndGlyphs">STP (new, old):</text>
<text x="1123.5" y="478.0" font-size="14.0" fill="#00ff00" fill-opacity="0.85" text-anchor="end" textLength="23.1" lengthAdjust="spacingAndGlyphs">0.11</text>
<text x="1124.5" y="478.0" font-size="14.0" fill="#ffffff" fill-opacity="0.85" text-anchor="start" textLength="3.4" lengthAdjust="spacingAndGlyphs">,</text>
<text x="1160.5" y="478.0" font-size="14.0" fill="#ff0000" fill-opacity="0.85" text-anchor="end" textLength="24.0" lengthAdjust="spacingAndGlyphs">0.14</text>
<text x="1230.5" y="478.0" font-size="14.0" fill="#fff" fill-opacity="0.85" text-anchor="start" textLength="14.2" lengthAdjust="spacingAndGlyphs">[1]</text>
<text x="894.6" y="495.0" font-size="14.0" fill="#fff" fill-opacity="0.85" text-anchor="start" textLength="73.8" lengthAdjust="spacingAndGlyphs">SB STP (fix):</text>
<text x="1123.5" y="495.0" font-size="14.0" fill="#00ff00" fill-opacity="0.85" text-anchor="end" textLength="24.0" lengthAdjust="spacingAndGlyphs">0.22</text>
<text x="1230.5" y="495.0" font-size="14.0" fill="#fff" fill-opacity="0.85" text-anchor="start" textLength="14.2" lengthAdjust="spacingAndGlyphs">[1]</text>
<text x="894.6" y="512.0" font-size="14.0" fill="#fff" fill-opacity="0.85" text-anchor="start" textLength="131.0" lengthAdjust="spacingAndGlyphs">Derecho Comp Param:</text>
<text x="1123.5" y="512.0" font-size="14.0" fill="#ff0000" fill-opacity="0.85" text-anchor="end" textLength="24.0" lengthAdjust="spacingAndGlyphs">1.08</text>
<text x="1230.5" y="512.0" font-size="14.0" fill="#fff" fill-opacity="0.85" text-anchor="start" textLength="14.2" lengthAdjust="spacingAndGlyphs">[1]</text>
<text x="894.6" y="529.0" font-size="14.0" fill="#fff" fill-opacity="0.85" text-anchor="start" textLength="145.6" lengthAdjust="spacingAndGlyphs">MCS 18m/s (MMP, MSP):</text>
<text x="1123.5" y="529.0" font-size="14.0" fill="#ff0000" fill-opacity="0.85" text-anchor="end" textLength="30.9" lengthAdjust="spacingAndGlyphs">92.39</text>
<text x="1124.5" y="529.0" font-size="14.0" fill="#fff" fill-opacity="0.85" text-anchor="start" textLength="3.4" lengthAdjust="spacingAndGlyphs">,</text>
<text x="1135.8" y="529.0" font-size="14.0" fill="#fff" fill-opacity="0.85" text-anchor="start" textLength="11.5" lengthAdjust="spacingAndGlyphs">---</text>
<text x="1230.5" y="529.0" font-size="14.0" fill="#fff" fill-opacity="0.85" text-anchor="start" textLength="18.5" lengthAdjust="spacingAndGlyphs">[%]</text>
<text x="894.6" y="546.0" font-size="14.0" fill="#fff" fill-opacity="0.85" text-anchor="start" textLength="143.1" lengthAdjust="spacingAndGlyphs">Exp. Supercell Index CH:</text>
<text x="1123.5" y="546.0" font-size="14.0" fill="#ff0000" fill-opacity="0.85" text-anchor="end" textLength="24.0" lengthAdjust="spacingAndGlyphs">4.36</text>
<text x="1230.5" y="546.0" font-size="14.0" fill="#fff" fill-opacity="0.85" text-anchor="start" textLength="14.2" lengthAdjust="spacingAndGlyphs">[1]</text>
<text x="894.6" y="563.0" font-size="14.0" fill="#fff" fill-opacity="0.85" text-anchor="start" textLength="97.5" lengthAdjust="spacingAndGlyphs">SWISS 12 Index:</text>
<text x="1123.5" y="563.0" font-size="14.0" fill="#ff0000" fill-opacity="0.85" text-anchor="end" textLength="35.0" lengthAdjust="spacingAndGlyphs">-12.37</text>
<text x="1230.5" y="563.0" font-size="14.0" fill="#fff" fill-opacity="0.85" text-anchor="start" textLength="14.2" lengthAdjust="spacingAndGlyphs">[1]</text>
<text x="894.6" y="588.0" font-size="14.0" fill="#fff" fill-opacity="0.85" text-anchor="start" textLength="98.9" lengthAdjust="spacingAndGlyphs">Wind Parameters</text>
<rect x="894.6" y="589" width="98.9" height="1" fill="#fff"/>
<text x="894.6" y="608.0" font-size="14.0" fill="#fff" fill-opacity="0.85" text-anchor="start" textLength="91.8" lengthAdjust="spacingAndGlyphs">Storm Direction:</text>
<text x="1123.5" y="608.0" font-size="14.0" fill="#ffffff" fill-opacity="0.85" text-anchor="end" textLength="37.8" lengthAdjust="spacingAndGlyphs">260.92</text>
<text x="1230.5" y="608.0" font-size="14.0" fill="#fff" fill-opacity="0.85" text-anchor="start" textLength="12.2" lengthAdjust="spacingAndGlyphs">[°]</text>
<text x="894.6" y="625.0" font-size="14.0" fill="#fff" fill-opacity="0.85" text-anchor="start" textLength="79.7" lengthAdjust="spacingAndGlyphs">Storm Motion:</text>
<text x="1123.5" y="625.0" font-size="14.0" fill="#ff0000" fill-opacity="0.85" text-anchor="end" textLength="30.9" lengthAdjust="spacingAndGlyphs">28.83</text>
<text x="1230.5" y="625.0" font-size="14.0" fill="#fff" fill-opacity="0.85" text-anchor="start" textLength="24.2" lengthAdjust="spacingAndGlyphs">[knt]</text>
<text x="894.6" y="645.0" font-size="14.0" fill="#fff" fill-opacity="0.85" text-anchor="start" textLength="104.6" lengthAdjust="spacingAndGlyphs">SR Wind Sfc-2km:</text>
<text x="1123.5" y="645.0" font-size="14.0" fill="#ff0000" fill-opacity="0.85" text-anchor="end" textLength="30.9" lengthAdjust="spacingAndGlyphs">22.32</text>
<text x="1230.5" y="645.0" font-size="14.0" fill="#fff" fill-opacity="0.85" text-anchor="start" textLength="24.2" lengthAdjust="spacingAndGlyphs">[knt]</text>
<text x="894.6" y="662.0" font-size="14.0" fill="#fff" fill-opacity="0.85" text-anchor="start" textLength="110.3" lengthAdjust="spacingAndGlyphs">SR Wind 4km-6km:</text>
<text x="1123.5" y="662.0" font-size="14.0" fill="#ff0000" fill-opacity="0.85" text-anchor="end" textLength="30.9" lengthAdjust="spacingAndGlyphs">19.59</text>
<text x="1230.5" y="662.0" font-size="14.0" fill="#fff" fill-opacity="0.85" text-anchor="start" textLength="24.2" lengthAdjust="spacingAndGlyphs">[knt]</text>
<text x="894.6" y="679.0" font-size="14.0" fill="#fff" fill-opacity="0.85" text-anchor="start" textLength="116.5" lengthAdjust="spacingAndGlyphs">SR Wind 9km-11km:</text>
<text x="1123.5" y="679.0" font-size="14.0" fill="#ff0000" fill-opacity="0.85" text-anchor="end" textLength="30.9" lengthAdjust="spacingAndGlyphs">28.01</text>
<text x="1230.5" y="679.0" font-size="14.0" fill="#fff" fill-opacity="0.85" text-anchor="start" textLength="45.5" lengthAdjust="spacingAndGlyphs">[knt] HP</text>
<text x="894.6" y="699.0" font-size="14.0" fill="#fff" fill-opacity="0.85" text-anchor="start" textLength="122.2" lengthAdjust="spacingAndGlyphs">Effective Shear 6000:</text>
<text x="1123.5" y="699.0" font-size="14.0" fill="#ff0000" fill-opacity="0.85" text-anchor="end" textLength="30.9" lengthAdjust="spacingAndGlyphs">44.21</text>
<text x="1230.5" y="699.0" font-size="14.0" fill="#fff" fill-opacity="0.85" text-anchor="start" textLength="24.2" lengthAdjust="spacingAndGlyphs">[knt]</text>
<text x="894.6" y="719.0" font-size="14.0" fill="#fff" fill-opacity="0.85" text-anchor="start" textLength="145.9" lengthAdjust="spacingAndGlyphs">Bulk Richardson Number:</text>
<text x="1123.5" y="719.0" font-size="14.0" fill="#00ff00" fill-opacity="0.85" text-anchor="end" textLength="24.0" lengthAdjust="spacingAndGlyphs">8.89</text>
<text x="1213.5" y="719.0" font-size="14.0" fill="#ffff00" fill-opacity="0.85" text-anchor="end" textLength="30.9" lengthAdjust="spacingAndGlyphs">18.55</text>
<text x="1230.5" y="719.0" font-size="14.0" fill="#fff" fill-opacity="0.85" text-anchor="start" textLength="14.2" lengthAdjust="spacingAndGlyphs">[1]</text>
<text x="894.6" y="739.0" font-size="14.0" fill="#fff" fill-opacity="0.85" text-anchor="start" textLength="110.8" lengthAdjust="spacingAndGlyphs">3km Effective SRH:</text>
<text x="1123.5" y="739.0" font-size="14.0" fill="#ff0000" fill-opacity="0.85" text-anchor="end" textLength="37.8" lengthAdjust="spacingAndGlyphs">210.52</text>
<text x="1230.5" y="739.0" font-size="14.0" fill="#fff" fill-opacity="0.85" text-anchor="start" textLength="54.0" lengthAdjust="spacingAndGlyphs">[m^2/s^2]</text>
<text x="894.6" y="756.0" font-size="14.0" fill="#fff" fill-opacity="0.85" text-anchor="start" textLength="145.1" lengthAdjust="spacingAndGlyphs">Max 3km SRH (Sfc-2km):</text>
<text x="1123.5" y="756.0" font-size="14.0" fill="#ff0000" fill-opacity="0.85" text-anchor="end" textLength="37.8" lengthAdjust="spacingAndGlyphs">342.19</text>
<text x="1230.5" y="756.0" font-size="14.0" fill="#fff" fill-opacity="0.85" text-anchor="start" textLength="54.0" lengthAdjust="spacingAndGlyphs">[m^2/s^2]</text>
<text x="894.6" y="773.0" font-size="14.0" fill="#fff" fill-opacity="0.85" text-anchor="start" textLength="148.8" lengthAdjust="spacingAndGlyphs">Max 3km SRH Level AGL:</text>
<text x="1123.5" y="773.0" font-size="14.0" fill="#00ff00" fill-opacity="0.85" text-anchor="end" textLength="44.7" lengthAdjust="spacingAndGlyphs">2000.00</text>
<text x="1230.5" y="773.0" font-size="14.0" fill="#fff" fill-opacity="0.85" text-anchor="start" textLength="17.8" lengthAdjust="spacingAndGlyphs">[m]</text>
<text x="894.6" y="793.0" font-size="14.0" fill="#fff" fill-opacity="0.85" text-anchor="start" textLength="151.6" lengthAdjust="spacingAndGlyphs">3km Energy Helicity Index:</text>
<text x="1123.5" y="793.0" font-size="14.0" fill="#ff0000" fill-opacity="0.85" text-anchor="end" textLength="24.0" lengthAdjust="spacingAndGlyphs">0.94</text>
<text x="1213.5" y="793.0" font-size="14.0" fill="#ff0000" fill-opacity="0.85" text-anchor="end" textLength="24.0" lengthAdjust="spacingAndGlyphs">1.96</text>
<text x="1230.5" y="793.0" font-size="14.0" fill="#fff" fill-opacity="0.85" text-anchor="start" textLength="14.2" lengthAdjust="spacingAndGlyphs">[1]</text>
<text x="894.6" y="810.0" font-size="14.0" fill="#fff" fill-opacity="0.85" text-anchor="start" textLength="133.8" lengthAdjust="spacingAndGlyphs">3km Vorticity Gen. Pot.:</text>
<text x="1123.5" y="810.0" font-size="14.0" fill="#ff0000" fill-opacity="0.85" text-anchor="end" textLength="24.0" lengthAdjust="spacingAndGlyphs">0.16</text>
<text x="1213.5" y="810.0" font-size="14.0" fill="#ff0000" fill-opacity="0.85" text-anchor="end" textLength="24.0" lengthAdjust="spacingAndGlyphs">0.22</text>
<text x="1230.5" y="810.0" font-size="14.0" fill="#fff" fill-opacity="0.85" text-anchor="start" textLength="40.9" lengthAdjust="spacingAndGlyphs">[m/s^2]</text>
<rect x="729" y="827" width="15" height="8" fill="#ff0000"/>
<text x="753.0" y="836.0" font-size="14.0" fill="#ff0000" fill-opacity="0.85" text-anchor="start" textLength="110.7" lengthAdjust="spacingAndGlyphs">Temperature Profile</text>
<rect x="729" y="847" width="15" height="8" fill="#00ffff"/>
<text x="753.0" y="856.0" font-size="14.0" fill="#00ffff" fill-opacity="0.85" text-anchor="start" textLength="91.7" lengthAdjust="spacingAndGlyphs">Dewpoint Profile</text>
<rect x="729" y="867" width="15" height="8" fill="#00ff00"/>
<text x="753.0" y="876.0" font-size="14.0" fill="#00ff00" fill-opacity="0.85" text-anchor="start" textLength="136.0" lengthAdjust="spacingAndGlyphs">OBS Windspeed Profile</text>
<rect x="729" y="887" width="15" height="8" fill="#ff0080"/>
<text x="753.0" y="896.0" font-size="14.0" fill="#ff0080" fill-opacity="0.85" text-anchor="start" textLength="125.8" lengthAdjust="spacingAndGlyphs">SR Windspeed Profile</text>
<rect x="729" y="907" width="15" height="8" fill="#c8c000"/>
<text x="753.0" y="916.0" font-size="14.0" fill="#c8c000" fill-opacity="0.85" text-anchor="start" textLength="222.0" lengthAdjust="spacingAndGlyphs">Sfc-3km Storm Relative Helicity Profile</text>
<rect x="729" y="927" width="15" height="8" fill="#46400a"/>
<text x="753.0" y="936.0" font-size="14.0" fill="#46400a" fill-opacity="0.85" text-anchor="start" textLength="203.8" lengthAdjust="spacingAndGlyphs">Effective Layer (CAPE &gt;= 100 J/kg)</text>
<rect x="1079" y="827" width="15" height="8" fill="#00ff00"/>
<text x="1103.0" y="836.0" font-size="14.0" fill="#00ff00" fill-opacity="0.85" text-anchor="start" textLength="182.7" lengthAdjust="spacingAndGlyphs">No / Non Severe Thunderstorms</text>
<rect x="1079" y="847" width="15" height="8" fill="#ffff00"/>
<text x="1103.0" y="856.0" font-size="14.0" fill="#ffff00" fill-opacity="0.85" text-anchor="start" textLength="210.5" lengthAdjust="spacingAndGlyphs">Scattered / Moderate Thunderstorms</text>
<rect x="1079" y="867" width="15" height="8" fill="#ff0000"/>
<text x="1103.0" y="876.0" font-size="14.0" fill="#ff0000" fill-opacity="0.85" text-anchor="start" textLength="208.6" lengthAdjust="spacingAndGlyphs">Widespread / Severe Thunderstorms</text>
</svg></body></html>
